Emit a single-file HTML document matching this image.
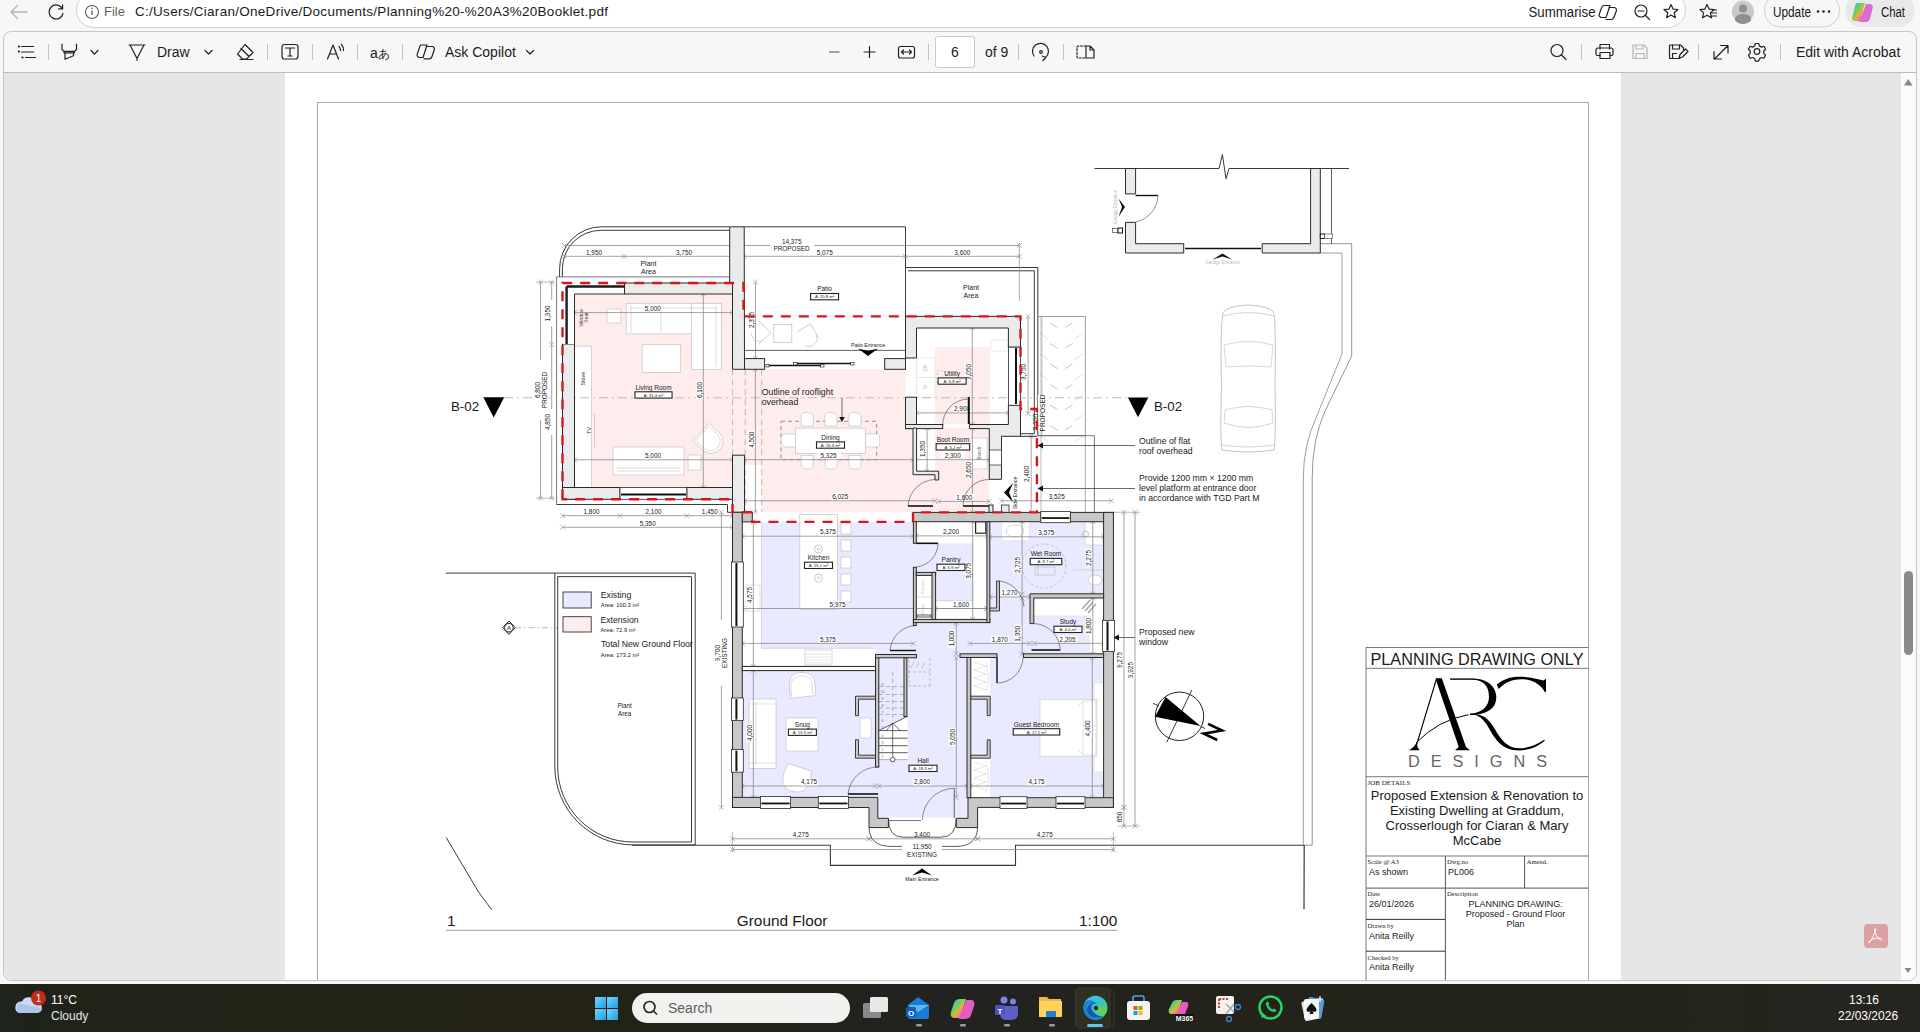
<!DOCTYPE html>
<html><head><meta charset="utf-8"><style>
*{box-sizing:border-box}
html,body{margin:0;padding:0;width:1920px;height:1032px;overflow:hidden;background:#f7f7f7;font-family:"Liberation Sans",sans-serif;color:#1a1a1a}
.a{position:absolute;white-space:nowrap}
#addr{left:76px;top:-8px;width:1610px;height:35.5px;border:1px solid #d2d2d2;border-radius:18px;background:#fff}
#win{left:3px;top:31px;width:1914px;height:950px;border:1px solid #c6c6c6;border-radius:8px;background:#f7f7f7;overflow:hidden}
#content{left:0;top:40px;width:1912px;height:909px;background:#e6e6e6;border-top:1px solid #bcbcbc}
#page{left:281px;top:0;width:1336px;height:909px;background:#fff}
#sb{left:1897px;top:0;width:15px;height:909px;background:#fbfbfb}
#task{left:0;top:984px;width:1920px;height:48px;background:linear-gradient(90deg,#1e231b 0%,#222316 16%,#232214 28%,#222220 50%,#24231a 70%,#21251a 90%,#252420 95%,#25241f 100%)}
.tt{color:#fff;font-size:12px}
.tbt{font-size:14px;color:#1c1c1c}
</style></head><body>

<div id="addr" class="a"></div>
<div id="win" class="a">
  <div id="content" class="a">
    <div id="page" class="a"></div>
    <div id="sb" class="a"></div>
  </div>
</div>
<div class="a" style="left:104px;top:4px;font-size:13px;color:#5f5f5f">File</div>
<div class="a" style="left:135px;top:4px;font-size:13.5px;color:#1a1a1a;letter-spacing:0.28px">C:/Users/Ciaran/OneDrive/Documents/Planning%20-%20A3%20Booklet.pdf</div>
<div class="a tbt" style="left:157px;top:44px">Draw</div>
<div class="a tbt" style="left:445px;top:44px">Ask Copilot</div>
<div class="a" style="left:935px;top:36px;width:40px;height:32px;background:#fff;border:1px solid #c9c9c9;border-radius:3px"></div>
<div class="a tbt" style="left:951px;top:44px">6</div>
<div class="a tbt" style="left:985px;top:44px">of 9</div>
<div class="a tbt" style="left:1796px;top:44px">Edit with Acrobat</div>

<svg class="a" style="left:0;top:0" width="1920" height="1032" viewBox="0 0 1920 1032">
<defs><clipPath id="pg"><rect x="285" y="73" width="1336" height="907"/></clipPath></defs>
<g fill="none" stroke="#b4b4b4" stroke-width="1.3" stroke-linecap="round"><path d="M11 12h16M11 12l6.5-6.5M11 12l6.5 6.5"/></g>
<g fill="none" stroke="#222" stroke-width="1.2" stroke-linecap="round" stroke-linejoin="round"><path d="M62.3 8.6A7 7 0 1 0 63 13.5"/><path d="M62.6 4.8v4h-4"/></g>
<circle cx="92" cy="12" r="6.5" fill="none" stroke="#5a5a5a" stroke-width="1.1"/><path d="M92 10.5v4.5" stroke="#5a5a5a" stroke-width="1.3"/><circle cx="92" cy="8.4" r="0.8" fill="#5a5a5a"/>
<g fill="none" stroke="#222" stroke-width="1.2" stroke-linecap="round" stroke-linejoin="round"><path d="M1604 5.5h6l-4 12h-4.5a2.5 2.5 0 0 1-2.3-3.2l2.5-6.8a3 3 0 0 1 2.3-2z"/><path d="M1609 7.5h5a2.5 2.5 0 0 1 2.4 3.2l-2.5 6.8a3 3 0 0 1-2.3 2h-5.6"/></g>
<g fill="none" stroke="#222" stroke-width="1.2" stroke-linecap="round" stroke-linejoin="round"><circle cx="1641" cy="11" r="6"/><path d="M1645.5 15.5l4 4M1638 11h6"/></g>
<g fill="none" stroke="#222" stroke-width="1.2" stroke-linecap="round" stroke-linejoin="round"><path d="M1671 4.5l2 4.6 5 .4-3.8 3.3 1.2 4.9-4.4-2.7-4.4 2.7 1.2-4.9-3.8-3.3 5-.4z"/></g>
<g fill="none" stroke="#222" stroke-width="1.2" stroke-linecap="round" stroke-linejoin="round"><path d="M1707 4.5l2.1 4.6 5 .5-3.7 3.3 1.1 4.9-4.5-2.6-4.5 2.6 1.1-4.9-3.7-3.3 5-.5z"/><path d="M1712.5 10h4M1711.5 13h5M1711.5 16h5"/></g>
<circle cx="1743" cy="11.5" r="11" fill="#c9c9c9"/><circle cx="1743" cy="8.5" r="4" fill="#8e8e8e"/><path d="M1735 19a8 5 0 0 1 16 0v1.5a11 11 0 0 1-16 0z" fill="#8e8e8e"/>
<rect x="1764.5" y="-6" width="75" height="33" rx="16" fill="#f7f7f7" stroke="#cfcfcf"/>
<circle cx="1818" cy="11.5" r="1.3" fill="#222"/><circle cx="1823.5" cy="11.5" r="1.3" fill="#222"/><circle cx="1829" cy="11.5" r="1.3" fill="#222"/>
<text x="1773" y="16.5" font-size="14" fill="#1a1a1a" font-family="Liberation Sans" textLength="38" lengthAdjust="spacingAndGlyphs">Update</text>
<text x="1528.5" y="16.5" font-size="14" fill="#1a1a1a" font-family="Liberation Sans" textLength="67" lengthAdjust="spacingAndGlyphs">Summarise</text>
<rect x="1845.5" y="-6" width="69" height="33" rx="16" fill="#e9e9e9"/>
<defs><linearGradient id="cg" x1="0" y1="0" x2="1" y2="1"><stop offset="0" stop-color="#2fb6f0"/><stop offset="0.45" stop-color="#7ad34a"/><stop offset="0.55" stop-color="#f4a93b"/><stop offset="1" stop-color="#c94fd8"/></linearGradient></defs>
<path d="M1857 3h8l-5 18h-5a3 3 0 0 1-2.8-3.8l2.8-11a4 4 0 0 1 2-3.2z" fill="url(#cg)"/><path d="M1866 4h4a3 3 0 0 1 2.8 3.8l-2.8 11a4 4 0 0 1-3.8 3.2h-7z" fill="#d85fd0" opacity="0.9"/>
<text x="1881" y="16.5" font-size="14" fill="#1a1a1a" font-family="Liberation Sans" textLength="24" lengthAdjust="spacingAndGlyphs">Chat</text>
<g fill="none" stroke="#222" stroke-width="1.2" stroke-linecap="round" stroke-linejoin="round"><path d="M21.5 46.5h12M21.5 52h12M25.5 57.5h10"/></g><g fill="#222"><circle cx="19" cy="46.5" r="1.1"/><circle cx="19" cy="51.5" r="1.1"/><circle cx="22.5" cy="57.5" r="1.1"/></g>
<path d="M48.5 44v16" stroke="#c4c4c4" stroke-width="1"/>
<path d="M267.5 44v16" stroke="#c4c4c4" stroke-width="1"/>
<path d="M312.5 44v16" stroke="#c4c4c4" stroke-width="1"/>
<path d="M357.5 44v16" stroke="#c4c4c4" stroke-width="1"/>
<path d="M402.5 44v16" stroke="#c4c4c4" stroke-width="1"/>
<path d="M928.5 44v16" stroke="#c4c4c4" stroke-width="1"/>
<path d="M1018.5 44v16" stroke="#c4c4c4" stroke-width="1"/>
<path d="M1063.5 44v16" stroke="#c4c4c4" stroke-width="1"/>
<path d="M1581.5 44v16" stroke="#c4c4c4" stroke-width="1"/>
<path d="M1698.5 44v16" stroke="#c4c4c4" stroke-width="1"/>
<path d="M1780.5 44v16" stroke="#c4c4c4" stroke-width="1"/>
<g fill="none" stroke="#222" stroke-width="1.2" stroke-linecap="round" stroke-linejoin="round"><path d="M62 44v5.5l2 1.8h10.5l2-1.8V44M64 51.3v1.5h10.5v-1.5M65 52.8v6.5l8.5-3.5v-3"/></g>
<g fill="none" stroke="#222" stroke-width="1.2" stroke-linecap="round" stroke-linejoin="round"><path d="M91 50.5l3.5 3.5 3.5-3.5"/></g>
<g fill="none" stroke="#222" stroke-width="1.2" stroke-linecap="round" stroke-linejoin="round"><path d="M129 45h16M130 45l7 13.5 7-13.5M137 58.5v1.8"/></g>
<g fill="none" stroke="#222" stroke-width="1.2" stroke-linecap="round" stroke-linejoin="round"><path d="M205 50.5l3.5 3.5 3.5-3.5"/></g>
<g fill="none" stroke="#222" stroke-width="1.2" stroke-linecap="round" stroke-linejoin="round"><path d="M245 44.5l8 8-6.5 6.5h-4l-5-5zM241 48.5l8 8M240 59.5h13"/></g>
<g fill="none" stroke="#222" stroke-width="1.2" stroke-linecap="round" stroke-linejoin="round"><rect x="282" y="44.5" width="16" height="14.5" rx="2.5"/><path d="M285.5 48h9M290 48v8M288 56h4"/></g>
<g fill="none" stroke="#222" stroke-width="1.2" stroke-linecap="round" stroke-linejoin="round"><path d="M327.5 59l5.5-14 5.5 14M329.5 54h7M339 46.5a5 5 0 0 1 1.5 4M341.5 44.5a8 8 0 0 1 2 6"/></g>
<text x="370" y="57.5" font-size="14" fill="#222" font-family="Liberation Sans">a</text><text x="378" y="57.5" font-size="12" fill="#222" font-family="Liberation Sans">&#x3042;</text>
<g fill="none" stroke="#222" stroke-width="1.2" stroke-linecap="round" stroke-linejoin="round"><path d="M421 45h6l-4 12.5h-3.5a2.5 2.5 0 0 1-2.3-3.3l2.4-7a3 3 0 0 1 1.4-2.2z"/><path d="M427 46.5h5a2.5 2.5 0 0 1 2.3 3.3l-2.4 7a3 3 0 0 1-2.4 2h-5.5"/></g>
<g fill="none" stroke="#222" stroke-width="1.2" stroke-linecap="round" stroke-linejoin="round"><path d="M526.5 50.5l3.5 3.5 3.5-3.5"/></g>
<path d="M829 52h10.5" stroke="#777" stroke-width="1.3"/>
<g fill="none" stroke="#222" stroke-width="1.2" stroke-linecap="round" stroke-linejoin="round"><path d="M864 52h11M869.5 46.5v11"/></g>
<g fill="none" stroke="#222" stroke-width="1.2" stroke-linecap="round" stroke-linejoin="round"><rect x="898.5" y="46.5" width="16" height="11.5" rx="2"/><path d="M901.5 52h10M903.5 50l-2 2 2 2M909.5 50l2 2-2 2"/></g>
<g fill="none" stroke="#222" stroke-width="1.2" stroke-linecap="round" stroke-linejoin="round"><path d="M1034 56a8 8 0 1 1 11.5 1.5"/><path d="M1043 60.5l2.7-3-3.5-1.5"/><circle cx="1041" cy="52" r="1.3"/></g>
<g fill="none" stroke="#222" stroke-width="1.2" stroke-linecap="round" stroke-linejoin="round"><path d="M1086 46h-7.5a1.5 1.5 0 0 0-1.5 1.5v9a1.5 1.5 0 0 0 1.5 1.5h7.5" stroke-dasharray="2 1.6"/><path d="M1086 46h4l4 4v8h-8zM1090 46v4h4"/></g>
<g fill="none" stroke="#222" stroke-width="1.2" stroke-linecap="round" stroke-linejoin="round"><circle cx="1557" cy="50.5" r="6"/><path d="M1561.5 55l4.5 4.5"/></g>
<g fill="none" stroke="#222" stroke-width="1.2" stroke-linecap="round" stroke-linejoin="round"><path d="M1600 49v-4.5h9.5V49M1600 55.5h-2.5a1.5 1.5 0 0 1-1.5-1.5v-4a2 2 0 0 1 2-2h13a2 2 0 0 1 2 2v4a1.5 1.5 0 0 1-1.5 1.5H1610"/><rect x="1600" y="52.5" width="10" height="6"/></g>
<g fill="none" stroke="#b5b5b5" stroke-width="1.2"><path d="M1633 45h11l3 3v10.5h-14z"/><path d="M1636 45v4h7v-4M1636 58.5v-5h8v5"/></g>
<g fill="none" stroke="#222" stroke-width="1.2" stroke-linecap="round" stroke-linejoin="round"><path d="M1680 58.5h-10.5v-13.5h11l3 3v2"/><path d="M1672.5 45v4h7v-4M1672.5 58.5v-5h4"/><path d="M1679 58l1-3.5 5.5-5.5 2.5 2.5-5.5 5.5z"/></g>
<g fill="none" stroke="#222" stroke-width="1.2" stroke-linecap="round" stroke-linejoin="round"><path d="M1714.5 59l13-13M1720.5 45.5h7.5v7.5M1714 51.5V59h7.5"/></g>
<g fill="none" stroke="#222" stroke-width="1.2" stroke-linecap="round" stroke-linejoin="round"><circle cx="1757" cy="51.5" r="2.8"/><path d="M1755.3 43.5h3.4l.6 2.4 2.2 1.2 2.4-.8 1.7 3-1.8 1.7v2.6l1.8 1.7-1.7 3-2.4-.8-2.2 1.2-.6 2.4h-3.4l-.6-2.4-2.2-1.2-2.4.8-1.7-3 1.8-1.7v-2.6l-1.8-1.7 1.7-3 2.4.8 2.2-1.2z"/></g>
<path d="M1904 85.5l4.3-6.5 4.3 6.5z" fill="#888"/>
<path d="M1904.5 968l3.5 5 3.5-5z" fill="#888"/>
<rect x="1904" y="571" width="9" height="84" rx="4.5" fill="#8a8a8a"/>
<rect x="1864" y="924" width="24" height="24" rx="4" fill="#d9a1a1"/>
<path d="M1869 943c3-3 5-8 6.5-13c.5-2 -1-2 -1 0c0 3 2.5 7 5 9.5c2 1 3 0 1-1c-3-1-7-.5-11.5 3c-1 1 -.2 2 .5 1z" fill="none" stroke="#fff" stroke-width="1"/>
<g clip-path="url(#pg)">
<rect x="574.5" y="294" width="158" height="193.5" fill="#ffeded" stroke="none" stroke-width="0" />
<path d="M732.5 369.3 L905.5 369.3 L905.5 428 L989.3 428 L989.3 512.3 L744.5 512.3 L744.5 455 L732.5 455 Z" fill="#ffeded" stroke="none" stroke-width="0" />
<rect x="744.5" y="465" width="17" height="47.3" fill="#fff" stroke="none" stroke-width="0" />
<rect x="935" y="347.2" width="54.8" height="77.3" fill="#ffeded" stroke="none" stroke-width="0" />
<rect x="742.3" y="521.9" width="361.2" height="275.6" fill="#e9e9ff" stroke="none" stroke-width="0" />
<rect x="877.5" y="797" width="90.5" height="20.5" fill="#e9e9ff" stroke="none" stroke-width="0" />
<rect x="574.5" y="346.2" width="16.8" height="141.3" fill="#fff" stroke="#c4c4c4" stroke-width="0.7" />
<text x="585.5" y="378.6" font-size="5.4" text-anchor="middle" fill="#333" font-family="Liberation Sans" transform="rotate(-90 585.5 378.6)" >Stove</text>
<text x="590.5" y="430.5" font-size="6" text-anchor="middle" fill="#333" font-family="Liberation Sans" transform="rotate(-90 590.5 430.5)" >TV</text>
<line x1="594.5" y1="414" x2="594.5" y2="447" stroke="#c4c4c4" stroke-width="0.8" />
<text x="582.5" y="317.5" font-size="5" text-anchor="middle" fill="#444" font-family="Liberation Sans" transform="rotate(-90 582.5 317.5)" >Window</text>
<text x="587.5" y="317.5" font-size="5" text-anchor="middle" fill="#444" font-family="Liberation Sans" transform="rotate(-90 587.5 317.5)" >Seat</text>
<rect x="626.2" y="303.3" width="95.2" height="30.6" fill="#fff" stroke="#c4c4c4" stroke-width="0.7" />
<rect x="691.6" y="303.3" width="29.8" height="66.2" fill="#fff" stroke="#c4c4c4" stroke-width="0.7" />
<line x1="631" y1="305" x2="631" y2="333" stroke="#c4c4c4" stroke-width="0.6" />
<line x1="661" y1="307" x2="661" y2="333" stroke="#c4c4c4" stroke-width="0.6" />
<line x1="631" y1="308" x2="716" y2="308" stroke="#c4c4c4" stroke-width="0.6" />
<line x1="716" y1="305" x2="716" y2="367" stroke="#c4c4c4" stroke-width="0.6" />
<rect x="607" y="309" width="14" height="14" fill="#fff" stroke="#c4c4c4" stroke-width="0.7" />
<rect x="642.2" y="344.5" width="38.5" height="27.9" fill="#fff" stroke="#c4c4c4" stroke-width="0.7" />
<rect x="613" y="447" width="71" height="28" fill="#fff" stroke="#c4c4c4" stroke-width="0.7" />
<line x1="617" y1="468" x2="680" y2="468" stroke="#c4c4c4" stroke-width="0.6" />
<line x1="617" y1="471" x2="680" y2="471" stroke="#c4c4c4" stroke-width="0.6" />
<rect x="688" y="455" width="13" height="15" fill="#fff" stroke="#c4c4c4" stroke-width="0.7" />
<path d="M692.6 440.7 L709.5 423.3 L720 433.5 A12 12 0 0 1 703.5 450.8 Z" fill="#fff" stroke="#c4c4c4" stroke-width="0.8" />
<path d="M695.5 440.5 L709.5 426.5 L717.5 434.5 A9.5 9.5 0 0 1 704 448 Z" fill="none" stroke="#c4c4c4" stroke-width="0.6" />
<rect x="781" y="421.3" width="95.6" height="38.4" fill="none" stroke="#777" stroke-width="0.8" stroke-dasharray="4 3"/>
<path d="M801.2 426 v-10 q0 -3.5 6 -3.5 q6 0 6 3.5 v10 z" fill="#fff" stroke="#c4c4c4" stroke-width="0.7" />
<path d="M801.2 455.5 v10 q0 3.5 6 3.5 q6 0 6 -3.5 v-10 z" fill="#fff" stroke="#c4c4c4" stroke-width="0.7" />
<path d="M825 426 v-10 q0 -3.5 6 -3.5 q6 0 6 3.5 v10 z" fill="#fff" stroke="#c4c4c4" stroke-width="0.7" />
<path d="M825 455.5 v10 q0 3.5 6 3.5 q6 0 6 -3.5 v-10 z" fill="#fff" stroke="#c4c4c4" stroke-width="0.7" />
<path d="M849 426 v-10 q0 -3.5 6 -3.5 q6 0 6 3.5 v10 z" fill="#fff" stroke="#c4c4c4" stroke-width="0.7" />
<path d="M849 455.5 v10 q0 3.5 6 3.5 q6 0 6 -3.5 v-10 z" fill="#fff" stroke="#c4c4c4" stroke-width="0.7" />
<path d="M795.6 434 h-11 q-3.5 0 -3.5 6.5 q0 6.5 3.5 6.5 h11 z" fill="#fff" stroke="#c4c4c4" stroke-width="0.7" />
<path d="M865.3 434 h11 q3.5 0 3.5 6.5 q0 6.5 -3.5 6.5 h-11 z" fill="#fff" stroke="#c4c4c4" stroke-width="0.7" />
<rect x="795.6" y="428.1" width="69.7" height="25.2" fill="#fff" stroke="#c4c4c4" stroke-width="0.7" />
<path d="M759 321 L771 332.5 L758.5 344.5 M751.5 333.5 A8 8 0 0 0 762 341" fill="none" stroke="#c4c4c4" stroke-width="0.8" />
<rect x="773.8" y="324.5" width="18" height="18" fill="none" stroke="#c4c4c4" stroke-width="0.8" />
<path d="M796.3 332.5 L810.6 323.8 L819 338.5 M805 345.5 A8 8 0 0 0 816 335" fill="none" stroke="#c4c4c4" stroke-width="0.8" />
<rect x="916.5" y="358" width="18.5" height="19.5" fill="#fff" stroke="#ddd" stroke-width="0.6" />
<rect x="916.5" y="377.5" width="18.5" height="19.7" fill="#fff" stroke="#ddd" stroke-width="0.6" />
<text x="927" y="368" font-size="4.5" text-anchor="middle" fill="#bbb" font-family="Liberation Sans" transform="rotate(-90 927 368)" >DR</text>
<text x="927" y="387" font-size="4.5" text-anchor="middle" fill="#bbb" font-family="Liberation Sans" transform="rotate(-90 927 387)" >W</text>
<rect x="991" y="340" width="17" height="11" fill="#fff" stroke="#ddd" stroke-width="0.6" />
<path d="M937 371 h9 v13 h-9 z" fill="none" stroke="#aaa" stroke-width="0.6" stroke-dasharray="2 2"/>
<rect x="916.6" y="428" width="18.4" height="43.2" fill="#fff" stroke="none" stroke-width="0" />
<rect x="970" y="438" width="17" height="31" fill="#fff" stroke="#c4c4c4" stroke-width="0.6" />
<text x="981" y="453" font-size="4.5" text-anchor="middle" fill="#666" font-family="Liberation Sans" transform="rotate(-90 981 453)" >Bench</text>
<rect x="1001.5" y="436.3" width="35.4" height="76.1" fill="#fff" stroke="none" stroke-width="0" />
<rect x="742.3" y="521.9" width="19.2" height="145.1" fill="#fff" stroke="none" stroke-width="0" />
<line x1="761.5" y1="521.9" x2="761.5" y2="648.3" stroke="#c4c4c4" stroke-width="0.6" />
<rect x="742.3" y="648.3" width="133.2" height="18.1" fill="#fff" stroke="none" stroke-width="0" />
<line x1="761.5" y1="648.3" x2="875.5" y2="648.3" stroke="#c4c4c4" stroke-width="0.6" />
<rect x="799.8" y="514.5" width="37.8" height="95" fill="#fff" stroke="#c4c4c4" stroke-width="0.7" />
<rect x="841" y="523" width="10" height="11" fill="#fff" stroke="#c4c4c4" stroke-width="0.7" />
<rect x="841" y="540" width="10" height="11" fill="#fff" stroke="#c4c4c4" stroke-width="0.7" />
<rect x="841" y="557" width="10" height="11" fill="#fff" stroke="#c4c4c4" stroke-width="0.7" />
<rect x="841" y="574" width="10" height="11" fill="#fff" stroke="#c4c4c4" stroke-width="0.7" />
<rect x="841" y="591" width="10" height="11" fill="#fff" stroke="#c4c4c4" stroke-width="0.7" />
<circle cx="818.5" cy="549" r="4" fill="none" stroke="#aaa" stroke-width="0.6"/><circle cx="818.5" cy="549" r="1.2" fill="none" stroke="#aaa" stroke-width="0.5"/>
<circle cx="818.5" cy="578" r="4" fill="none" stroke="#aaa" stroke-width="0.6"/><circle cx="818.5" cy="578" r="1.2" fill="none" stroke="#aaa" stroke-width="0.5"/>
<rect x="805" y="650" width="27" height="15" fill="#fff" stroke="#bbb" stroke-width="0.6" />
<line x1="806" y1="654" x2="831" y2="654" stroke="#ccc" stroke-width="0.5" />
<line x1="806" y1="657" x2="831" y2="657" stroke="#ccc" stroke-width="0.5" />
<line x1="806" y1="660" x2="831" y2="660" stroke="#ccc" stroke-width="0.5" />
<line x1="806" y1="663" x2="831" y2="663" stroke="#ccc" stroke-width="0.5" />
<rect x="746" y="585" width="14" height="26" fill="#fff" stroke="#ccc" stroke-width="0.6" />
<rect x="749" y="699" width="27" height="69.5" fill="#fff" stroke="#c4c4c4" stroke-width="0.7" />
<line x1="756" y1="702" x2="756" y2="765" stroke="#c4c4c4" stroke-width="0.6" />
<line x1="749" y1="704" x2="776" y2="704" stroke="#c4c4c4" stroke-width="0.5" />
<line x1="749" y1="763" x2="776" y2="763" stroke="#c4c4c4" stroke-width="0.5" />
<rect x="786" y="718" width="32" height="33" fill="#fff" stroke="#c4c4c4" stroke-width="0.6" />
<path d="M790.5 698.5 Q788 684 791 677 Q795 672 803 672.4 Q812 673 814.5 680 Q816 690 815 695.5 Z" fill="#fff" stroke="#c4c4c4" stroke-width="0.8" />
<path d="M791.5 696 Q790 684 793 679 Q797 675.5 803 675.8 Q810 676 812 682 Q813 690 812 694" fill="none" stroke="#c4c4c4" stroke-width="0.6" />
<path d="M788 763.5 L811.5 771 Q811 786 803 791 Q795 794 787 789 Q781 784 783.5 774 Z" fill="#fff" stroke="#c4c4c4" stroke-width="0.8" />
<rect x="860" y="718" width="11" height="20" fill="#fff" stroke="#c4c4c4" stroke-width="0.6" />
<path d="M878.8 730.6 L907.5 716.3 V759.6 H878.8 Z" fill="#fff" stroke="none" stroke-width="0" />
<line x1="878.8" y1="686.6" x2="904" y2="686.6" stroke="#999" stroke-width="0.7" stroke-dasharray="4 3"/>
<line x1="878.8" y1="694.5" x2="904" y2="694.5" stroke="#999" stroke-width="0.7" stroke-dasharray="4 3"/>
<line x1="878.8" y1="701.5" x2="904" y2="701.5" stroke="#999" stroke-width="0.7" stroke-dasharray="4 3"/>
<line x1="878.8" y1="708" x2="904" y2="708" stroke="#999" stroke-width="0.7" stroke-dasharray="4 3"/>
<line x1="878.8" y1="714.5" x2="904" y2="714.5" stroke="#999" stroke-width="0.7" stroke-dasharray="4 3"/>
<line x1="892.7" y1="672" x2="892.7" y2="718" stroke="#999" stroke-width="0.7" stroke-dasharray="4 3"/>
<line x1="878.8" y1="730.6" x2="907.5" y2="730.6" stroke="#333" stroke-width="0.8" />
<line x1="878.8" y1="738.2" x2="907.5" y2="738.2" stroke="#333" stroke-width="0.8" />
<line x1="878.8" y1="745.7" x2="907.5" y2="745.7" stroke="#333" stroke-width="0.8" />
<line x1="878.8" y1="752.7" x2="907.5" y2="752.7" stroke="#333" stroke-width="0.8" />
<line x1="878.8" y1="759.6" x2="907.5" y2="759.6" stroke="#999" stroke-width="0.7" />
<line x1="878.8" y1="730.6" x2="907.5" y2="716.3" stroke="#333" stroke-width="0.8" />
<path d="M886 731 L892.7 723 L900.5 731 M892.7 723 V757" fill="none" stroke="#333" stroke-width="0.7" />
<circle cx="892.7" cy="759.6" r="2.3" fill="#fff" stroke="#333" stroke-width="0.8"/>
<text x="882.5" y="758" font-size="3.6" text-anchor="middle" fill="#777" font-family="Liberation Sans" >1</text>
<text x="882.5" y="751" font-size="3.6" text-anchor="middle" fill="#777" font-family="Liberation Sans" >2</text>
<text x="882.5" y="744" font-size="3.6" text-anchor="middle" fill="#777" font-family="Liberation Sans" >3</text>
<text x="882.5" y="736.5" font-size="3.6" text-anchor="middle" fill="#777" font-family="Liberation Sans" >4</text>
<text x="882.5" y="729" font-size="3.6" text-anchor="middle" fill="#777" font-family="Liberation Sans" >5</text>
<text x="882.5" y="722" font-size="3.6" text-anchor="middle" fill="#777" font-family="Liberation Sans" >6</text>
<text x="882.5" y="713.5" font-size="3.6" text-anchor="middle" fill="#777" font-family="Liberation Sans" >7</text>
<text x="882.5" y="707" font-size="3.6" text-anchor="middle" fill="#777" font-family="Liberation Sans" >8</text>
<text x="882.5" y="700" font-size="3.6" text-anchor="middle" fill="#777" font-family="Liberation Sans" >9</text>
<text x="882.5" y="692.5" font-size="3.6" text-anchor="middle" fill="#777" font-family="Liberation Sans" >10</text>
<text x="882.5" y="685.5" font-size="3.6" text-anchor="middle" fill="#777" font-family="Liberation Sans" >11</text>
<path d="M909 660 v26 h21 M908 672 h22 M930 658 v28" fill="none" stroke="#aaa" stroke-width="0.7" stroke-dasharray="3 2"/>
<path d="M911 668 l3 -6 M916 668 l3 -6 M922 668 l3 -6" fill="none" stroke="#aaa" stroke-width="0.6" />
<rect x="916.3" y="521.7" width="70.9" height="21.6" fill="#fff" stroke="none" stroke-width="0" />
<rect x="972.7" y="521.7" width="14.5" height="97.8" fill="#fff" stroke="none" stroke-width="0" />
<rect x="935.5" y="600.8" width="51.7" height="18.7" fill="#fff" stroke="none" stroke-width="0" />
<path d="M935.5 600.8 H972.7 V543.3" fill="none" stroke="#bbb" stroke-width="0.6" />
<rect x="975.6" y="521.7" width="10.2" height="11.5" fill="#fff" stroke="#222" stroke-width="1.2" />
<rect x="916.3" y="575" width="15.7" height="44.6" fill="#fff" stroke="#ccc" stroke-width="0.6" />
<line x1="916.3" y1="597" x2="932" y2="597" stroke="#ccc" stroke-width="0.6" />
<text x="924" y="587" font-size="3.8" text-anchor="middle" fill="#bbb" font-family="Liberation Sans" transform="rotate(-90 924 587)" >Freezer</text>
<text x="924" y="609" font-size="3.8" text-anchor="middle" fill="#bbb" font-family="Liberation Sans" transform="rotate(-90 924 609)" >Fridge</text>
<rect x="917" y="615" width="14" height="2" fill="#fff" stroke="#333" stroke-width="0.8" />
<rect x="1001.3" y="521.3" width="27.9" height="19.4" fill="#fff" stroke="#ddd" stroke-width="0.6" />
<ellipse cx="1015" cy="531" rx="9" ry="6" fill="none" stroke="#bbb" stroke-width="0.6"/>
<circle cx="1044" cy="566" r="22" fill="none" stroke="#aaa" stroke-width="0.6" stroke-dasharray="3 2"/>
<rect x="1085" y="522" width="18" height="23" fill="#fff" stroke="#ccc" stroke-width="0.6" />
<circle cx="1085.5" cy="534" r="3" fill="none" stroke="#999" stroke-width="0.6"/>
<ellipse cx="1095" cy="580" rx="7" ry="5" fill="#fff" stroke="#bbb" stroke-width="0.6"/>
<line x1="1073" y1="570" x2="1103" y2="570" stroke="#ccc" stroke-width="0.8" />
<path d="M1035 567 h20 v8 h-20 z M1038 562 v14" fill="none" stroke="#bbb" stroke-width="0.6" />
<rect x="1034" y="598" width="69.6" height="18" fill="#fff" stroke="none" stroke-width="0" />
<rect x="1090" y="598" width="13.6" height="55.8" fill="#fff" stroke="none" stroke-width="0" />
<line x1="1034" y1="616" x2="1090" y2="616" stroke="#ddd" stroke-width="0.6" />
<path d="M1082 609 l8 -9 M1085 611 l8 -9 M1088 613 l8 -9" fill="none" stroke="#aaa" stroke-width="1.6" />
<rect x="1094" y="683" width="9.5" height="89" fill="#fff" stroke="#ddd" stroke-width="0.6" />
<rect x="1040" y="699.3" width="57" height="57" fill="#fff" stroke="#ccc" stroke-width="0.7" />
<rect x="1083" y="701" width="13" height="25" fill="#fff" stroke="#ccc" stroke-width="0.6" />
<rect x="1083" y="730" width="13" height="25" fill="#fff" stroke="#ccc" stroke-width="0.6" />
<path d="M1083 701 l-5 5 M1083 755 l-5 -5" fill="none" stroke="#ccc" stroke-width="0.6" />
<rect x="971" y="657.8" width="19" height="38.2" fill="#fff" stroke="none" stroke-width="0" />
<rect x="971" y="758" width="19" height="39" fill="#fff" stroke="none" stroke-width="0" />
<path d="M974 662 l12 4 l-12 4 l12 4 l-12 4 l12 4 l-12 4 l12 4 M986 662 l3 15 l-3 15" fill="none" stroke="#ccc" stroke-width="0.5" />
<path d="M974 762 l12 4 l-12 4 l12 4 l-12 4 l12 4 l-12 4 l12 4 M986 762 l3 15 l-3 15" fill="none" stroke="#ccc" stroke-width="0.5" />
<rect x="317.5" y="102.5" width="1271" height="900" fill="none" stroke="#a8a8a8" stroke-width="1" />
<path d="M559.6 277 V268.8 A42 42 0 0 1 601.5 226.8 H729.7" fill="none" stroke="#3a3a3a" stroke-width="1" />
<path d="M562.4 277 V268.8 A38.5 38.5 0 0 1 600.9 230.3 H729.7" fill="none" stroke="#3a3a3a" stroke-width="1" />
<path d="M556.6 504.5 V276.9 H729.7" fill="none" stroke="#777" stroke-width="1" />
<path d="M556.6 504.5 H727.5 V512.3 H732.5" fill="none" stroke="#3a3a3a" stroke-width="1" />
<path d="M744.2 226.8 H905.5 V358.6" fill="none" stroke="#3a3a3a" stroke-width="1" />
<line x1="744.5" y1="350.4" x2="905.5" y2="350.4" stroke="#3a3a3a" stroke-width="0.8" />
<line x1="732.6" y1="369.3" x2="732.6" y2="512" stroke="#aaa" stroke-width="0.8" stroke-dasharray="6 4"/>
<line x1="745.2" y1="369.3" x2="745.2" y2="512" stroke="#aaa" stroke-width="0.8" stroke-dasharray="6 4"/>
<line x1="761.7" y1="369.3" x2="761.7" y2="512" stroke="#aaa" stroke-width="0.8" stroke-dasharray="6 4"/>
<path d="M905.5 267.5 H1037.8 V435.7" fill="none" stroke="#3a3a3a" stroke-width="1" />
<path d="M908 270.8 H1034.3 V433.7 H1020.5" fill="none" stroke="#3a3a3a" stroke-width="1" />
<rect x="1037.8" y="316.5" width="47.5" height="119.2" fill="none" stroke="#888" stroke-width="0.8" />
<line x1="1042" y1="316.5" x2="1042" y2="435.7" stroke="#aaa" stroke-width="0.6" />
<path d="M1050 323.0 l7.5 4.5 M1065 327.5 l7.5 -4.5" fill="none" stroke="#999" stroke-width="0.6" />
<path d="M1040 333.0 l8 6 M1083 333.0 l-8 6" fill="none" stroke="#bbb" stroke-width="0.5" />
<path d="M1050 343.5 l7.5 4.5 M1065 348.0 l7.5 -4.5" fill="none" stroke="#999" stroke-width="0.6" />
<path d="M1040 353.5 l8 6 M1083 353.5 l-8 6" fill="none" stroke="#bbb" stroke-width="0.5" />
<path d="M1050 364.0 l7.5 4.5 M1065 368.5 l7.5 -4.5" fill="none" stroke="#999" stroke-width="0.6" />
<path d="M1040 374.0 l8 6 M1083 374.0 l-8 6" fill="none" stroke="#bbb" stroke-width="0.5" />
<path d="M1050 384.5 l7.5 4.5 M1065 389.0 l7.5 -4.5" fill="none" stroke="#999" stroke-width="0.6" />
<path d="M1040 394.5 l8 6 M1083 394.5 l-8 6" fill="none" stroke="#bbb" stroke-width="0.5" />
<path d="M1050 405.0 l7.5 4.5 M1065 409.5 l7.5 -4.5" fill="none" stroke="#999" stroke-width="0.6" />
<path d="M1040 415.0 l8 6 M1083 415.0 l-8 6" fill="none" stroke="#bbb" stroke-width="0.5" />
<path d="M1050 425.5 l7.5 4.5 M1065 430.0 l7.5 -4.5" fill="none" stroke="#999" stroke-width="0.6" />
<path d="M1040 435.5 l8 6 M1083 435.5 l-8 6" fill="none" stroke="#bbb" stroke-width="0.5" />
<path d="M1037.8 435.7 H1094.4 V512.4" fill="none" stroke="#555" stroke-width="0.8" />
<line x1="1085.3" y1="435.7" x2="1085.3" y2="512.4" stroke="#999" stroke-width="0.8" />
<path d="M1320.3 253 H1342 V354 L1316.8 416 Q1303.3 445 1303.3 478 V845.2" fill="none" stroke="#888" stroke-width="0.8" />
<path d="M1320.3 243.7 H1351.7 V356 L1324.6 412 Q1312.2 440 1312.2 478 V845.2 H1304" fill="none" stroke="#777" stroke-width="0.8" />
<line x1="1304.2" y1="845.2" x2="1304" y2="909.2" stroke="#3a3a3a" stroke-width="1.2" />
<path d="M632 845.3 H830.4 V865.4 H1015.5 V845.3 H1304.2" fill="none" stroke="#3a3a3a" stroke-width="1.1" />
<path d="M446.2 837.5 L478.5 892 L491.7 909.7" fill="none" stroke="#3a3a3a" stroke-width="1" />
<path d="M869 827.6 Q869.5 846.4 891 846.4 H956 Q977 846.4 977.6 827.6" fill="none" stroke="#333" stroke-width="0.8" />
<line x1="445.8" y1="573.1" x2="554.8" y2="573.1" stroke="#3a3a3a" stroke-width="1" />
<path d="M554.8 573.1 V766.4 A78.5 78.5 0 0 0 633 844.9 H695.2 V573.1 Z" fill="none" stroke="#3a3a3a" stroke-width="1" />
<path d="M557.7 576.6 V766 A75 75 0 0 0 633 842 H691.5 V576.6 Z" fill="none" stroke="#3a3a3a" stroke-width="1" />
<rect x="563" y="592" width="28.2" height="16" fill="#e9e9ff" stroke="#333" stroke-width="0.9" />
<rect x="563" y="616.7" width="28.2" height="15.3" fill="#ffeded" stroke="#333" stroke-width="0.9" />
<text x="600.8" y="597.8" font-size="8.7" text-anchor="start" fill="#1a1a1a" font-family="Liberation Sans" >Existing</text>
<text x="600.8" y="607.4" font-size="5.8" text-anchor="start" fill="#1a1a1a" font-family="Liberation Sans" >Area: 100.3 m&#178;</text>
<text x="600.4" y="622.5" font-size="8.7" text-anchor="start" fill="#1a1a1a" font-family="Liberation Sans" >Extension</text>
<text x="600.4" y="632" font-size="5.8" text-anchor="start" fill="#1a1a1a" font-family="Liberation Sans" >Area: 72.9 m&#178;</text>
<text x="601" y="646.6" font-size="8.7" text-anchor="start" fill="#1a1a1a" font-family="Liberation Sans" >Total New Ground Floor</text>
<text x="600.8" y="656.5" font-size="5.8" text-anchor="start" fill="#1a1a1a" font-family="Liberation Sans" >Area: 173.2 m&#178;</text>
<text x="624.6" y="708" font-size="6.3" text-anchor="middle" fill="#1a1a1a" font-family="Liberation Sans" >Plant</text>
<text x="624.6" y="715.5" font-size="6.3" text-anchor="middle" fill="#1a1a1a" font-family="Liberation Sans" >Area</text>
<line x1="515" y1="627.7" x2="557" y2="627.7" stroke="#999" stroke-width="0.7" stroke-dasharray="6 3 1.5 3"/>
<path d="M502.5 627.7 L508.9 621 L515.3 627.7 L508.9 634.4 Z" fill="#fff" stroke="#222" stroke-width="1" />
<circle cx="508.9" cy="627.7" r="4.3" fill="#fff" stroke="#222" stroke-width="1"/>
<text x="508.9" y="630.2" font-size="6" text-anchor="middle" fill="#1a1a1a" font-family="Liberation Sans" >A</text>
<line x1="504" y1="397.8" x2="1128" y2="397.8" stroke="#bbb" stroke-width="1" stroke-dasharray="9 4 2 4"/>
<path d="M483.3 397.2 H504.2 L493.7 417.6 Z" fill="#000"/>
<path d="M1127.9 397.5 H1148.3 L1138 417.2 Z" fill="#000"/>
<text x="451" y="411" font-size="13.3" text-anchor="start" fill="#1a1a1a" font-family="Liberation Sans" >B-02</text>
<text x="1154" y="411" font-size="13.3" text-anchor="start" fill="#1a1a1a" font-family="Liberation Sans" >B-02</text>
<path d="M1094.5 168.5 H1219 L1222.4 154.5 L1226 178.8 L1229 168.5 H1349" fill="none" stroke="#3a3a3a" stroke-width="1" />
<path d="M1125.5 168.5 L1135.6 168.5 L1135.6 193.9 L1125.5 193.9 Z" fill="#ebebeb" stroke="#2a2a2a" stroke-width="1" />
<path d="M1125.5 222.4 L1135.6 222.4 L1135.6 243.7 L1183.7 243.7 L1183.7 253 L1125.5 253 Z" fill="#ebebeb" stroke="#2a2a2a" stroke-width="1" />
<path d="M1262.2 243.7 L1310.6 243.7 L1310.6 168.5 L1320.3 168.5 L1320.3 253 L1262.2 253 Z" fill="#ebebeb" stroke="#2a2a2a" stroke-width="1" />
<line x1="1331.5" y1="168.5" x2="1331.5" y2="243.7" stroke="#3a3a3a" stroke-width="0.8" />
<line x1="1185" y1="248.5" x2="1261" y2="248.5" stroke="#111" stroke-width="1.5" />
<line x1="1135.6" y1="195.5" x2="1158" y2="195.5" stroke="#111" stroke-width="1.4" />
<path d="M1158 195.5 A28 28 0 0 1 1135.6 222" fill="none" stroke="#444" stroke-width="0.6" />
<path d="M1118.5 198.5 L1125 207 L1118.5 217 L1122 207 Z" fill="#111"/>
<text x="1116.5" y="207" font-size="4.5" text-anchor="middle" fill="#bbb" font-family="Liberation Sans" transform="rotate(-90 1116.5 207)" >Garage Entrance</text>
<path d="M1212.5 259.5 L1222.5 253.5 L1232 259.5 L1222.5 256.5 Z" fill="#111"/>
<text x="1222.5" y="263.5" font-size="4.5" text-anchor="middle" fill="#bbb" font-family="Liberation Sans" >Garage Entrance</text>
<rect x="1112.5" y="228.5" width="5.5" height="4" fill="#fff" stroke="#444" stroke-width="0.7" />
<rect x="1118" y="228" width="4.5" height="5" fill="#fff" stroke="#111" stroke-width="1" />
<rect x="1320.3" y="234" width="4.2" height="4.5" fill="#fff" stroke="#111" stroke-width="1" />
<rect x="1324.5" y="234" width="8" height="4.5" fill="#fff" stroke="#555" stroke-width="0.7" />
<path d="M1223 313 Q1226 306 1248 305 Q1271 306 1274 313 Q1276 330 1275 385 Q1276 440 1274 450 Q1248 454 1222 450 Q1220 440 1221.5 385 Q1220 330 1223 313 Z" fill="none" stroke="#aaa" stroke-width="0.7" />
<path d="M1224 345 Q1248 338 1273 345 L1271 367 Q1248 365 1226 367 Z" fill="none" stroke="#bbb" stroke-width="0.6" />
<path d="M1225 410 Q1248 403 1272 410 L1273 423 Q1248 432 1224 423 Z" fill="none" stroke="#bbb" stroke-width="0.6" />
<path d="M1223 316 Q1248 309 1274 316" fill="none" stroke="#bbb" stroke-width="0.6" />
<path d="M1222 445 Q1248 449 1274 445" fill="none" stroke="#bbb" stroke-width="0.6" />
<circle cx="1179.5" cy="716.3" r="24.2" fill="none" stroke="#222" stroke-width="1"/>
<line x1="1166.7" y1="742.3" x2="1191.9" y2="690" stroke="#222" stroke-width="0.9" />
<line x1="1153.1" y1="703.4" x2="1158.6" y2="705.8" stroke="#222" stroke-width="0.9" />
<path d="M1165.6 697 L1155 716.7 L1200.5 726 Z" fill="#000"/>
<path d="M1208.1 723.8 L1222 730.5 L1203.7 733.6 L1217.3 740" fill="none" stroke="#000" stroke-width="2.6"/>
<line x1="1200.5" y1="726.3" x2="1205" y2="728.5" stroke="#222" stroke-width="0.9" />
<line x1="564.4" y1="245.5" x2="1019.4" y2="245.5" stroke="#8a8a8a" stroke-width="0.8" />
<path d="M564.4 245.5 l-2.5 2.5 M564.4 245.5 l2.5 2.5 M564.4 245.5 l-2.5 -2.5 M564.4 245.5 l2.5 -2.5" stroke="#8a8a8a" stroke-width="0.6"/>
<path d="M1019.4 245.5 l-2.5 2.5 M1019.4 245.5 l2.5 2.5 M1019.4 245.5 l-2.5 -2.5 M1019.4 245.5 l2.5 -2.5" stroke="#8a8a8a" stroke-width="0.6"/>
<rect x="770" y="237" width="44" height="16" fill="#fff" stroke="none" stroke-width="0" />
<text x="791.7" y="243.6" font-size="6.4" text-anchor="middle" fill="#1a1a1a" font-family="Liberation Sans" >14,375</text>
<text x="791.5" y="250.8" font-size="6.4" text-anchor="middle" fill="#1a1a1a" font-family="Liberation Sans" >PROPOSED</text>
<line x1="564.4" y1="256.3" x2="1019.4" y2="256.3" stroke="#8a8a8a" stroke-width="0.8" />
<path d="M564.4 256.3 l-2.5 2.5 M564.4 256.3 l2.5 2.5 M564.4 256.3 l-2.5 -2.5 M564.4 256.3 l2.5 -2.5" stroke="#8a8a8a" stroke-width="0.6"/>
<path d="M624 256.3 l-2.5 2.5 M624 256.3 l2.5 2.5 M624 256.3 l-2.5 -2.5 M624 256.3 l2.5 -2.5" stroke="#8a8a8a" stroke-width="0.6"/>
<path d="M744 256.3 l-2.5 2.5 M744 256.3 l2.5 2.5 M744 256.3 l-2.5 -2.5 M744 256.3 l2.5 -2.5" stroke="#8a8a8a" stroke-width="0.6"/>
<path d="M905.3 256.3 l-2.5 2.5 M905.3 256.3 l2.5 2.5 M905.3 256.3 l-2.5 -2.5 M905.3 256.3 l2.5 -2.5" stroke="#8a8a8a" stroke-width="0.6"/>
<path d="M1019.4 256.3 l-2.5 2.5 M1019.4 256.3 l2.5 2.5 M1019.4 256.3 l-2.5 -2.5 M1019.4 256.3 l2.5 -2.5" stroke="#8a8a8a" stroke-width="0.6"/>
<rect x="582" y="248" width="24" height="7.2" fill="#fff" stroke="none" stroke-width="0" />
<text x="594" y="254.8" font-size="6.4" text-anchor="middle" fill="#1a1a1a" font-family="Liberation Sans" >1,950</text>
<rect x="672" y="248" width="24" height="7.2" fill="#fff" stroke="none" stroke-width="0" />
<text x="684" y="254.8" font-size="6.4" text-anchor="middle" fill="#1a1a1a" font-family="Liberation Sans" >3,750</text>
<rect x="812.7" y="248" width="24" height="7.2" fill="#fff" stroke="none" stroke-width="0" />
<text x="824.7" y="254.8" font-size="6.4" text-anchor="middle" fill="#1a1a1a" font-family="Liberation Sans" >5,075</text>
<rect x="950.3" y="248" width="24" height="7.2" fill="#fff" stroke="none" stroke-width="0" />
<text x="962.3" y="254.8" font-size="6.4" text-anchor="middle" fill="#1a1a1a" font-family="Liberation Sans" >3,600</text>
<line x1="1019.4" y1="243" x2="1019.4" y2="301" stroke="#8c8c8c" stroke-width="0.7" />
<line x1="540.5" y1="282.1" x2="540.5" y2="498.2" stroke="#8a8a8a" stroke-width="0.8" />
<path d="M540.5 282.1 l-2.5 2.5 M540.5 282.1 l2.5 2.5 M540.5 282.1 l-2.5 -2.5 M540.5 282.1 l2.5 -2.5" stroke="#8a8a8a" stroke-width="0.6"/>
<path d="M540.5 498.2 l-2.5 2.5 M540.5 498.2 l2.5 2.5 M540.5 498.2 l-2.5 -2.5 M540.5 498.2 l2.5 -2.5" stroke="#8a8a8a" stroke-width="0.6"/>
<line x1="536" y1="282.1" x2="555" y2="282.1" stroke="#8c8c8c" stroke-width="0.6" />
<line x1="536" y1="498.2" x2="555" y2="498.2" stroke="#8c8c8c" stroke-width="0.6" />
<rect x="533" y="360" width="16" height="60" fill="#fff" stroke="none" stroke-width="0" />
<text x="539.5" y="390" font-size="6.4" text-anchor="middle" fill="#1a1a1a" font-family="Liberation Sans" transform="rotate(-90 539.5 390)" >6,800</text>
<text x="546.5" y="390" font-size="6.4" text-anchor="middle" fill="#1a1a1a" font-family="Liberation Sans" transform="rotate(-90 546.5 390)" >PROPOSED</text>
<line x1="551.7" y1="282.1" x2="551.7" y2="498.2" stroke="#8a8a8a" stroke-width="0.8" />
<path d="M551.7 282.1 l-2.5 2.5 M551.7 282.1 l2.5 2.5 M551.7 282.1 l-2.5 -2.5 M551.7 282.1 l2.5 -2.5" stroke="#8a8a8a" stroke-width="0.6"/>
<path d="M551.7 344.5 l-2.5 2.5 M551.7 344.5 l2.5 2.5 M551.7 344.5 l-2.5 -2.5 M551.7 344.5 l2.5 -2.5" stroke="#8a8a8a" stroke-width="0.6"/>
<path d="M551.7 498.2 l-2.5 2.5 M551.7 498.2 l2.5 2.5 M551.7 498.2 l-2.5 -2.5 M551.7 498.2 l2.5 -2.5" stroke="#8a8a8a" stroke-width="0.6"/>
<rect x="545" y="300" width="8" height="26" fill="#fff" stroke="none" stroke-width="0" />
<text x="550.2" y="313.4" font-size="6.4" text-anchor="middle" fill="#1a1a1a" font-family="Liberation Sans" transform="rotate(-90 550.2 313.4)" >1,950</text>
<rect x="545" y="409" width="8" height="26" fill="#fff" stroke="none" stroke-width="0" />
<text x="550.2" y="422" font-size="6.4" text-anchor="middle" fill="#1a1a1a" font-family="Liberation Sans" transform="rotate(-90 550.2 422)" >4,850</text>
<line x1="562.7" y1="515.7" x2="732.7" y2="515.7" stroke="#8a8a8a" stroke-width="0.8" />
<path d="M562.7 515.7 l-2.5 2.5 M562.7 515.7 l2.5 2.5 M562.7 515.7 l-2.5 -2.5 M562.7 515.7 l2.5 -2.5" stroke="#8a8a8a" stroke-width="0.6"/>
<path d="M620 515.7 l-2.5 2.5 M620 515.7 l2.5 2.5 M620 515.7 l-2.5 -2.5 M620 515.7 l2.5 -2.5" stroke="#8a8a8a" stroke-width="0.6"/>
<path d="M686.8 515.7 l-2.5 2.5 M686.8 515.7 l2.5 2.5 M686.8 515.7 l-2.5 -2.5 M686.8 515.7 l2.5 -2.5" stroke="#8a8a8a" stroke-width="0.6"/>
<path d="M732.7 515.7 l-2.5 2.5 M732.7 515.7 l2.5 2.5 M732.7 515.7 l-2.5 -2.5 M732.7 515.7 l2.5 -2.5" stroke="#8a8a8a" stroke-width="0.6"/>
<rect x="580.5" y="507.5" width="22" height="7.2" fill="#fff" stroke="none" stroke-width="0" />
<text x="591.5" y="514" font-size="6.4" text-anchor="middle" fill="#1a1a1a" font-family="Liberation Sans" >1,800</text>
<rect x="642.5" y="507.5" width="22" height="7.2" fill="#fff" stroke="none" stroke-width="0" />
<text x="653.5" y="514" font-size="6.4" text-anchor="middle" fill="#1a1a1a" font-family="Liberation Sans" >2,100</text>
<rect x="698.7" y="507.5" width="22" height="7.2" fill="#fff" stroke="none" stroke-width="0" />
<text x="709.7" y="514" font-size="6.4" text-anchor="middle" fill="#1a1a1a" font-family="Liberation Sans" >1,450</text>
<line x1="562.7" y1="527.3" x2="732.7" y2="527.3" stroke="#8a8a8a" stroke-width="0.8" />
<path d="M562.7 527.3 l-2.5 2.5 M562.7 527.3 l2.5 2.5 M562.7 527.3 l-2.5 -2.5 M562.7 527.3 l2.5 -2.5" stroke="#8a8a8a" stroke-width="0.6"/>
<path d="M732.7 527.3 l-2.5 2.5 M732.7 527.3 l2.5 2.5 M732.7 527.3 l-2.5 -2.5 M732.7 527.3 l2.5 -2.5" stroke="#8a8a8a" stroke-width="0.6"/>
<rect x="638.69" y="519.7" width="18.01" height="6.9" fill="#fff" stroke="none" stroke-width="0" class="lb"/>
<text x="647.7" y="525.5" font-size="6.4" text-anchor="middle" fill="#1a1a1a" font-family="Liberation Sans" >5,350</text>
<line x1="574.4" y1="312.6" x2="732.4" y2="312.6" stroke="#8a8a8a" stroke-width="0.8" />
<path d="M574.4 312.6 l-2.5 2.5 M574.4 312.6 l2.5 2.5 M574.4 312.6 l-2.5 -2.5 M574.4 312.6 l2.5 -2.5" stroke="#8a8a8a" stroke-width="0.6"/>
<path d="M732.4 312.6 l-2.5 2.5 M732.4 312.6 l2.5 2.5 M732.4 312.6 l-2.5 -2.5 M732.4 312.6 l2.5 -2.5" stroke="#8a8a8a" stroke-width="0.6"/>
<rect x="643.79" y="305" width="18.01" height="6.9" fill="#fff" stroke="none" stroke-width="0" class="lb"/>
<text x="652.8" y="310.8" font-size="6.4" text-anchor="middle" fill="#1a1a1a" font-family="Liberation Sans" >5,000</text>
<line x1="574.5" y1="459.8" x2="732.7" y2="459.8" stroke="#8a8a8a" stroke-width="0.8" />
<path d="M574.5 459.8 l-2.5 2.5 M574.5 459.8 l2.5 2.5 M574.5 459.8 l-2.5 -2.5 M574.5 459.8 l2.5 -2.5" stroke="#8a8a8a" stroke-width="0.6"/>
<path d="M732.7 459.8 l-2.5 2.5 M732.7 459.8 l2.5 2.5 M732.7 459.8 l-2.5 -2.5 M732.7 459.8 l2.5 -2.5" stroke="#8a8a8a" stroke-width="0.6"/>
<rect x="643.99" y="452.2" width="18.01" height="6.9" fill="#fff" stroke="none" stroke-width="0" class="lb"/>
<text x="653" y="458" font-size="6.4" text-anchor="middle" fill="#1a1a1a" font-family="Liberation Sans" >5,000</text>
<line x1="703.3" y1="294" x2="703.3" y2="487.5" stroke="#8a8a8a" stroke-width="0.8" />
<path d="M703.3 294 l-2.5 2.5 M703.3 294 l2.5 2.5 M703.3 294 l-2.5 -2.5 M703.3 294 l2.5 -2.5" stroke="#8a8a8a" stroke-width="0.6"/>
<path d="M703.3 487.5 l-2.5 2.5 M703.3 487.5 l2.5 2.5 M703.3 487.5 l-2.5 -2.5 M703.3 487.5 l2.5 -2.5" stroke="#8a8a8a" stroke-width="0.6"/>
<rect x="695.7" y="380.99" width="6.9" height="18.01" fill="#fff" stroke="none" stroke-width="0" />
<text x="701.5" y="390" font-size="6.4" text-anchor="middle" fill="#1a1a1a" font-family="Liberation Sans" transform="rotate(-90 701.5 390)" >6,100</text>
<line x1="755.5" y1="282" x2="755.5" y2="358.6" stroke="#8a8a8a" stroke-width="0.8" />
<path d="M755.5 282 l-2.5 2.5 M755.5 282 l2.5 2.5 M755.5 282 l-2.5 -2.5 M755.5 282 l2.5 -2.5" stroke="#8a8a8a" stroke-width="0.6"/>
<path d="M755.5 358.6 l-2.5 2.5 M755.5 358.6 l2.5 2.5 M755.5 358.6 l-2.5 -2.5 M755.5 358.6 l2.5 -2.5" stroke="#8a8a8a" stroke-width="0.6"/>
<rect x="747.9" y="310.99" width="6.9" height="18.01" fill="#fff" stroke="none" stroke-width="0" />
<text x="753.7" y="320" font-size="6.4" text-anchor="middle" fill="#1a1a1a" font-family="Liberation Sans" transform="rotate(-90 753.7 320)" >2,375</text>
<line x1="755.4" y1="369.3" x2="755.4" y2="512" stroke="#8a8a8a" stroke-width="0.8" />
<path d="M755.4 369.3 l-2.5 2.5 M755.4 369.3 l2.5 2.5 M755.4 369.3 l-2.5 -2.5 M755.4 369.3 l2.5 -2.5" stroke="#8a8a8a" stroke-width="0.6"/>
<path d="M755.4 512 l-2.5 2.5 M755.4 512 l2.5 2.5 M755.4 512 l-2.5 -2.5 M755.4 512 l2.5 -2.5" stroke="#8a8a8a" stroke-width="0.6"/>
<rect x="747.8" y="430.69" width="6.9" height="18.01" fill="#fff" stroke="none" stroke-width="0" />
<text x="753.6" y="439.7" font-size="6.4" text-anchor="middle" fill="#1a1a1a" font-family="Liberation Sans" transform="rotate(-90 753.6 439.7)" >4,500</text>
<line x1="744.5" y1="459.7" x2="989.3" y2="459.7" stroke="#8a8a8a" stroke-width="0.8" />
<path d="M744.5 459.7 l-2.5 2.5 M744.5 459.7 l2.5 2.5 M744.5 459.7 l-2.5 -2.5 M744.5 459.7 l2.5 -2.5" stroke="#8a8a8a" stroke-width="0.6"/>
<path d="M913 459.7 l-2.5 2.5 M913 459.7 l2.5 2.5 M913 459.7 l-2.5 -2.5 M913 459.7 l2.5 -2.5" stroke="#8a8a8a" stroke-width="0.6"/>
<path d="M989.3 459.7 l-2.5 2.5 M989.3 459.7 l2.5 2.5 M989.3 459.7 l-2.5 -2.5 M989.3 459.7 l2.5 -2.5" stroke="#8a8a8a" stroke-width="0.6"/>
<rect x="817" y="451.5" width="24" height="7.2" fill="#fff" stroke="none" stroke-width="0" />
<text x="828.5" y="458" font-size="6.4" text-anchor="middle" fill="#1a1a1a" font-family="Liberation Sans" >5,325</text>
<rect x="941" y="451" width="24" height="7.2" fill="#fff" stroke="none" stroke-width="0" />
<text x="952.7" y="457.8" font-size="6.4" text-anchor="middle" fill="#1a1a1a" font-family="Liberation Sans" >2,300</text>
<line x1="744.5" y1="500.8" x2="935.1" y2="500.8" stroke="#8a8a8a" stroke-width="0.8" />
<path d="M744.5 500.8 l-2.5 2.5 M744.5 500.8 l2.5 2.5 M744.5 500.8 l-2.5 -2.5 M744.5 500.8 l2.5 -2.5" stroke="#8a8a8a" stroke-width="0.6"/>
<path d="M935.1 500.8 l-2.5 2.5 M935.1 500.8 l2.5 2.5 M935.1 500.8 l-2.5 -2.5 M935.1 500.8 l2.5 -2.5" stroke="#8a8a8a" stroke-width="0.6"/>
<rect x="831.19" y="493.2" width="18.01" height="6.9" fill="#fff" stroke="none" stroke-width="0" class="lb"/>
<text x="840.2" y="499" font-size="6.4" text-anchor="middle" fill="#1a1a1a" font-family="Liberation Sans" >6,025</text>
<line x1="927.1" y1="428" x2="927.1" y2="471.2" stroke="#8a8a8a" stroke-width="0.8" />
<path d="M927.1 428 l-2.5 2.5 M927.1 428 l2.5 2.5 M927.1 428 l-2.5 -2.5 M927.1 428 l2.5 -2.5" stroke="#8a8a8a" stroke-width="0.6"/>
<path d="M927.1 471.2 l-2.5 2.5 M927.1 471.2 l2.5 2.5 M927.1 471.2 l-2.5 -2.5 M927.1 471.2 l2.5 -2.5" stroke="#8a8a8a" stroke-width="0.6"/>
<rect x="919.5" y="439.99" width="6.9" height="18.01" fill="#fff" stroke="none" stroke-width="0" />
<text x="925.3" y="449" font-size="6.4" text-anchor="middle" fill="#1a1a1a" font-family="Liberation Sans" transform="rotate(-90 925.3 449)" >1,350</text>
<line x1="972.4" y1="428" x2="972.4" y2="512.4" stroke="#8a8a8a" stroke-width="0.8" />
<path d="M972.4 428 l-2.5 2.5 M972.4 428 l2.5 2.5 M972.4 428 l-2.5 -2.5 M972.4 428 l2.5 -2.5" stroke="#8a8a8a" stroke-width="0.6"/>
<path d="M972.4 512.4 l-2.5 2.5 M972.4 512.4 l2.5 2.5 M972.4 512.4 l-2.5 -2.5 M972.4 512.4 l2.5 -2.5" stroke="#8a8a8a" stroke-width="0.6"/>
<rect x="964.8" y="460.99" width="6.9" height="18.01" fill="#fff" stroke="none" stroke-width="0" />
<text x="970.6" y="470" font-size="6.4" text-anchor="middle" fill="#1a1a1a" font-family="Liberation Sans" transform="rotate(-90 970.6 470)" >2,650</text>
<line x1="938.7" y1="501.4" x2="989.3" y2="501.4" stroke="#8a8a8a" stroke-width="0.8" />
<path d="M938.7 501.4 l-2.5 2.5 M938.7 501.4 l2.5 2.5 M938.7 501.4 l-2.5 -2.5 M938.7 501.4 l2.5 -2.5" stroke="#8a8a8a" stroke-width="0.6"/>
<path d="M989.3 501.4 l-2.5 2.5 M989.3 501.4 l2.5 2.5 M989.3 501.4 l-2.5 -2.5 M989.3 501.4 l2.5 -2.5" stroke="#8a8a8a" stroke-width="0.6"/>
<rect x="955.29" y="493.8" width="18.01" height="6.9" fill="#fff" stroke="none" stroke-width="0" class="lb"/>
<text x="964.3" y="499.6" font-size="6.4" text-anchor="middle" fill="#1a1a1a" font-family="Liberation Sans" >1,600</text>
<line x1="1031.2" y1="436.3" x2="1031.2" y2="512.4" stroke="#8a8a8a" stroke-width="0.8" />
<path d="M1031.2 436.3 l-2.5 2.5 M1031.2 436.3 l2.5 2.5 M1031.2 436.3 l-2.5 -2.5 M1031.2 436.3 l2.5 -2.5" stroke="#8a8a8a" stroke-width="0.6"/>
<path d="M1031.2 512.4 l-2.5 2.5 M1031.2 512.4 l2.5 2.5 M1031.2 512.4 l-2.5 -2.5 M1031.2 512.4 l2.5 -2.5" stroke="#8a8a8a" stroke-width="0.6"/>
<rect x="1023.6" y="464.99" width="6.9" height="18.01" fill="#fff" stroke="none" stroke-width="0" />
<text x="1029.4" y="474" font-size="6.4" text-anchor="middle" fill="#1a1a1a" font-family="Liberation Sans" transform="rotate(-90 1029.4 474)" >2,400</text>
<line x1="1001.5" y1="500.8" x2="1111.5" y2="500.8" stroke="#8a8a8a" stroke-width="0.8" />
<path d="M1001.5 500.8 l-2.5 2.5 M1001.5 500.8 l2.5 2.5 M1001.5 500.8 l-2.5 -2.5 M1001.5 500.8 l2.5 -2.5" stroke="#8a8a8a" stroke-width="0.6"/>
<path d="M1111.5 500.8 l-2.5 2.5 M1111.5 500.8 l2.5 2.5 M1111.5 500.8 l-2.5 -2.5 M1111.5 500.8 l2.5 -2.5" stroke="#8a8a8a" stroke-width="0.6"/>
<rect x="1047.69" y="493.2" width="18.01" height="6.9" fill="#fff" stroke="none" stroke-width="0" class="lb"/>
<text x="1056.7" y="499" font-size="6.4" text-anchor="middle" fill="#1a1a1a" font-family="Liberation Sans" >3,525</text>
<line x1="916.5" y1="412.9" x2="1008.4" y2="412.9" stroke="#8a8a8a" stroke-width="0.8" />
<path d="M916.5 412.9 l-2.5 2.5 M916.5 412.9 l2.5 2.5 M916.5 412.9 l-2.5 -2.5 M916.5 412.9 l2.5 -2.5" stroke="#8a8a8a" stroke-width="0.6"/>
<path d="M1008.4 412.9 l-2.5 2.5 M1008.4 412.9 l2.5 2.5 M1008.4 412.9 l-2.5 -2.5 M1008.4 412.9 l2.5 -2.5" stroke="#8a8a8a" stroke-width="0.6"/>
<rect x="952.99" y="405.3" width="18.01" height="6.9" fill="#fff" stroke="none" stroke-width="0" class="lb"/>
<text x="962" y="411.1" font-size="6.4" text-anchor="middle" fill="#1a1a1a" font-family="Liberation Sans" >2,900</text>
<line x1="972.3" y1="328" x2="972.3" y2="424.5" stroke="#8a8a8a" stroke-width="0.8" />
<path d="M972.3 328 l-2.5 2.5 M972.3 328 l2.5 2.5 M972.3 328 l-2.5 -2.5 M972.3 328 l2.5 -2.5" stroke="#8a8a8a" stroke-width="0.6"/>
<path d="M972.3 424.5 l-2.5 2.5 M972.3 424.5 l2.5 2.5 M972.3 424.5 l-2.5 -2.5 M972.3 424.5 l2.5 -2.5" stroke="#8a8a8a" stroke-width="0.6"/>
<rect x="964.7" y="362.99" width="6.9" height="18.01" fill="#fff" stroke="none" stroke-width="0" />
<text x="970.5" y="372" font-size="6.4" text-anchor="middle" fill="#1a1a1a" font-family="Liberation Sans" transform="rotate(-90 970.5 372)" >3,050</text>
<line x1="1028.1" y1="316.4" x2="1028.1" y2="413.5" stroke="#8a8a8a" stroke-width="0.8" />
<path d="M1028.1 316.4 l-2.5 2.5 M1028.1 316.4 l2.5 2.5 M1028.1 316.4 l-2.5 -2.5 M1028.1 316.4 l2.5 -2.5" stroke="#8a8a8a" stroke-width="0.6"/>
<path d="M1028.1 413.5 l-2.5 2.5 M1028.1 413.5 l2.5 2.5 M1028.1 413.5 l-2.5 -2.5 M1028.1 413.5 l2.5 -2.5" stroke="#8a8a8a" stroke-width="0.6"/>
<rect x="1020.5" y="362.99" width="6.9" height="18.01" fill="#fff" stroke="none" stroke-width="0" />
<text x="1026.3" y="372" font-size="6.4" text-anchor="middle" fill="#1a1a1a" font-family="Liberation Sans" transform="rotate(-90 1026.3 372)" >3,750</text>
<line x1="1041" y1="316.5" x2="1041" y2="512.4" stroke="#8c8c8c" stroke-width="0.6" />
<rect x="1038" y="395" width="9" height="36" fill="#fff" stroke="none" stroke-width="0" />
<text x="1037.5" y="422" font-size="6.5" text-anchor="middle" fill="#1a1a1a" font-family="Liberation Sans" transform="rotate(-90 1037.5 422)" >3,150</text>
<text x="1044.5" y="413" font-size="6.5" text-anchor="middle" fill="#1a1a1a" font-family="Liberation Sans" transform="rotate(-90 1044.5 413)" >PROPOSED</text>
<line x1="742.3" y1="536.2" x2="913.4" y2="536.2" stroke="#8a8a8a" stroke-width="0.8" />
<path d="M742.3 536.2 l-2.5 2.5 M742.3 536.2 l2.5 2.5 M742.3 536.2 l-2.5 -2.5 M742.3 536.2 l2.5 -2.5" stroke="#8a8a8a" stroke-width="0.6"/>
<path d="M913.4 536.2 l-2.5 2.5 M913.4 536.2 l2.5 2.5 M913.4 536.2 l-2.5 -2.5 M913.4 536.2 l2.5 -2.5" stroke="#8a8a8a" stroke-width="0.6"/>
<rect x="818.89" y="528.6" width="18.01" height="6.9" fill="#fff" stroke="none" stroke-width="0" class="lb"/>
<text x="827.9" y="534.4" font-size="6.4" text-anchor="middle" fill="#1a1a1a" font-family="Liberation Sans" >5,375</text>
<line x1="742.3" y1="608.5" x2="986.9" y2="608.5" stroke="#8a8a8a" stroke-width="0.8" />
<path d="M742.3 608.5 l-2.5 2.5 M742.3 608.5 l2.5 2.5 M742.3 608.5 l-2.5 -2.5 M742.3 608.5 l2.5 -2.5" stroke="#8a8a8a" stroke-width="0.6"/>
<path d="M986.9 608.5 l-2.5 2.5 M986.9 608.5 l2.5 2.5 M986.9 608.5 l-2.5 -2.5 M986.9 608.5 l2.5 -2.5" stroke="#8a8a8a" stroke-width="0.6"/>
<rect x="828.59" y="600.9" width="18.01" height="6.9" fill="#fff" stroke="none" stroke-width="0" class="lb"/>
<text x="837.6" y="606.7" font-size="6.4" text-anchor="middle" fill="#1a1a1a" font-family="Liberation Sans" >5,975</text>
<line x1="742.3" y1="643.4" x2="913.4" y2="643.4" stroke="#8a8a8a" stroke-width="0.8" />
<path d="M742.3 643.4 l-2.5 2.5 M742.3 643.4 l2.5 2.5 M742.3 643.4 l-2.5 -2.5 M742.3 643.4 l2.5 -2.5" stroke="#8a8a8a" stroke-width="0.6"/>
<path d="M913.4 643.4 l-2.5 2.5 M913.4 643.4 l2.5 2.5 M913.4 643.4 l-2.5 -2.5 M913.4 643.4 l2.5 -2.5" stroke="#8a8a8a" stroke-width="0.6"/>
<rect x="818.89" y="635.8" width="18.01" height="6.9" fill="#fff" stroke="none" stroke-width="0" class="lb"/>
<text x="827.9" y="641.6" font-size="6.4" text-anchor="middle" fill="#1a1a1a" font-family="Liberation Sans" >5,375</text>
<line x1="753.3" y1="521.9" x2="753.3" y2="666.4" stroke="#8a8a8a" stroke-width="0.8" />
<path d="M753.3 521.9 l-2.5 2.5 M753.3 521.9 l2.5 2.5 M753.3 521.9 l-2.5 -2.5 M753.3 521.9 l2.5 -2.5" stroke="#8a8a8a" stroke-width="0.6"/>
<path d="M753.3 666.4 l-2.5 2.5 M753.3 666.4 l2.5 2.5 M753.3 666.4 l-2.5 -2.5 M753.3 666.4 l2.5 -2.5" stroke="#8a8a8a" stroke-width="0.6"/>
<rect x="745.7" y="585.99" width="6.9" height="18.01" fill="#fff" stroke="none" stroke-width="0" />
<text x="751.5" y="595" font-size="6.4" text-anchor="middle" fill="#1a1a1a" font-family="Liberation Sans" transform="rotate(-90 751.5 595)" >4,575</text>
<line x1="753.3" y1="670.2" x2="753.3" y2="797.4" stroke="#8a8a8a" stroke-width="0.8" />
<path d="M753.3 670.2 l-2.5 2.5 M753.3 670.2 l2.5 2.5 M753.3 670.2 l-2.5 -2.5 M753.3 670.2 l2.5 -2.5" stroke="#8a8a8a" stroke-width="0.6"/>
<path d="M753.3 797.4 l-2.5 2.5 M753.3 797.4 l2.5 2.5 M753.3 797.4 l-2.5 -2.5 M753.3 797.4 l2.5 -2.5" stroke="#8a8a8a" stroke-width="0.6"/>
<rect x="745.7" y="723.99" width="6.9" height="18.01" fill="#fff" stroke="none" stroke-width="0" />
<text x="751.5" y="733" font-size="6.4" text-anchor="middle" fill="#1a1a1a" font-family="Liberation Sans" transform="rotate(-90 751.5 733)" >4,000</text>
<line x1="742.3" y1="786" x2="875.5" y2="786" stroke="#8a8a8a" stroke-width="0.8" />
<path d="M742.3 786 l-2.5 2.5 M742.3 786 l2.5 2.5 M742.3 786 l-2.5 -2.5 M742.3 786 l2.5 -2.5" stroke="#8a8a8a" stroke-width="0.6"/>
<path d="M875.5 786 l-2.5 2.5 M875.5 786 l2.5 2.5 M875.5 786 l-2.5 -2.5 M875.5 786 l2.5 -2.5" stroke="#8a8a8a" stroke-width="0.6"/>
<rect x="799.99" y="778.4" width="18.01" height="6.9" fill="#fff" stroke="none" stroke-width="0" class="lb"/>
<text x="809" y="784.2" font-size="6.4" text-anchor="middle" fill="#1a1a1a" font-family="Liberation Sans" >4,175</text>
<line x1="878.8" y1="786" x2="967" y2="786" stroke="#8a8a8a" stroke-width="0.8" />
<path d="M878.8 786 l-2.5 2.5 M878.8 786 l2.5 2.5 M878.8 786 l-2.5 -2.5 M878.8 786 l2.5 -2.5" stroke="#8a8a8a" stroke-width="0.6"/>
<path d="M967 786 l-2.5 2.5 M967 786 l2.5 2.5 M967 786 l-2.5 -2.5 M967 786 l2.5 -2.5" stroke="#8a8a8a" stroke-width="0.6"/>
<rect x="912.99" y="778.4" width="18.01" height="6.9" fill="#fff" stroke="none" stroke-width="0" class="lb"/>
<text x="922" y="784.2" font-size="6.4" text-anchor="middle" fill="#1a1a1a" font-family="Liberation Sans" >2,800</text>
<line x1="970.8" y1="786" x2="1103.6" y2="786" stroke="#8a8a8a" stroke-width="0.8" />
<path d="M970.8 786 l-2.5 2.5 M970.8 786 l2.5 2.5 M970.8 786 l-2.5 -2.5 M970.8 786 l2.5 -2.5" stroke="#8a8a8a" stroke-width="0.6"/>
<path d="M1103.6 786 l-2.5 2.5 M1103.6 786 l2.5 2.5 M1103.6 786 l-2.5 -2.5 M1103.6 786 l2.5 -2.5" stroke="#8a8a8a" stroke-width="0.6"/>
<rect x="1027.49" y="778.4" width="18.01" height="6.9" fill="#fff" stroke="none" stroke-width="0" class="lb"/>
<text x="1036.5" y="784.2" font-size="6.4" text-anchor="middle" fill="#1a1a1a" font-family="Liberation Sans" >4,175</text>
<line x1="956.3" y1="657.8" x2="956.3" y2="797.4" stroke="#8a8a8a" stroke-width="0.8" />
<path d="M956.3 657.8 l-2.5 2.5 M956.3 657.8 l2.5 2.5 M956.3 657.8 l-2.5 -2.5 M956.3 657.8 l2.5 -2.5" stroke="#8a8a8a" stroke-width="0.6"/>
<path d="M956.3 797.4 l-2.5 2.5 M956.3 797.4 l2.5 2.5 M956.3 797.4 l-2.5 -2.5 M956.3 797.4 l2.5 -2.5" stroke="#8a8a8a" stroke-width="0.6"/>
<rect x="948.7" y="727.99" width="6.9" height="18.01" fill="#fff" stroke="none" stroke-width="0" />
<text x="954.5" y="737" font-size="6.4" text-anchor="middle" fill="#1a1a1a" font-family="Liberation Sans" transform="rotate(-90 954.5 737)" >5,050</text>
<line x1="1092.3" y1="657.5" x2="1092.3" y2="797.7" stroke="#8a8a8a" stroke-width="0.8" />
<path d="M1092.3 657.5 l-2.5 2.5 M1092.3 657.5 l2.5 2.5 M1092.3 657.5 l-2.5 -2.5 M1092.3 657.5 l2.5 -2.5" stroke="#8a8a8a" stroke-width="0.6"/>
<path d="M1092.3 797.7 l-2.5 2.5 M1092.3 797.7 l2.5 2.5 M1092.3 797.7 l-2.5 -2.5 M1092.3 797.7 l2.5 -2.5" stroke="#8a8a8a" stroke-width="0.6"/>
<rect x="1084.7" y="719.39" width="6.9" height="18.01" fill="#fff" stroke="none" stroke-width="0" />
<text x="1090.5" y="728.4" font-size="6.4" text-anchor="middle" fill="#1a1a1a" font-family="Liberation Sans" transform="rotate(-90 1090.5 728.4)" >4,400</text>
<line x1="916.3" y1="535.9" x2="986.9" y2="535.9" stroke="#8a8a8a" stroke-width="0.8" />
<path d="M916.3 535.9 l-2.5 2.5 M916.3 535.9 l2.5 2.5 M916.3 535.9 l-2.5 -2.5 M916.3 535.9 l2.5 -2.5" stroke="#8a8a8a" stroke-width="0.6"/>
<path d="M986.9 535.9 l-2.5 2.5 M986.9 535.9 l2.5 2.5 M986.9 535.9 l-2.5 -2.5 M986.9 535.9 l2.5 -2.5" stroke="#8a8a8a" stroke-width="0.6"/>
<rect x="941.99" y="528.3" width="18.01" height="6.9" fill="#fff" stroke="none" stroke-width="0" class="lb"/>
<text x="951" y="534.1" font-size="6.4" text-anchor="middle" fill="#1a1a1a" font-family="Liberation Sans" >2,200</text>
<line x1="972.7" y1="521.7" x2="972.7" y2="619.4" stroke="#8a8a8a" stroke-width="0.8" />
<path d="M972.7 521.7 l-2.5 2.5 M972.7 521.7 l2.5 2.5 M972.7 521.7 l-2.5 -2.5 M972.7 521.7 l2.5 -2.5" stroke="#8a8a8a" stroke-width="0.6"/>
<path d="M972.7 619.4 l-2.5 2.5 M972.7 619.4 l2.5 2.5 M972.7 619.4 l-2.5 -2.5 M972.7 619.4 l2.5 -2.5" stroke="#8a8a8a" stroke-width="0.6"/>
<rect x="965.1" y="561.69" width="6.9" height="18.01" fill="#fff" stroke="none" stroke-width="0" />
<text x="970.9" y="570.7" font-size="6.4" text-anchor="middle" fill="#1a1a1a" font-family="Liberation Sans" transform="rotate(-90 970.9 570.7)" >3,075</text>
<line x1="935.6" y1="608.5" x2="986.9" y2="608.5" stroke="#8a8a8a" stroke-width="0.8" />
<path d="M935.6 608.5 l-2.5 2.5 M935.6 608.5 l2.5 2.5 M935.6 608.5 l-2.5 -2.5 M935.6 608.5 l2.5 -2.5" stroke="#8a8a8a" stroke-width="0.6"/>
<path d="M986.9 608.5 l-2.5 2.5 M986.9 608.5 l2.5 2.5 M986.9 608.5 l-2.5 -2.5 M986.9 608.5 l2.5 -2.5" stroke="#8a8a8a" stroke-width="0.6"/>
<rect x="951.99" y="600.9" width="18.01" height="6.9" fill="#fff" stroke="none" stroke-width="0" class="lb"/>
<text x="961" y="606.7" font-size="6.4" text-anchor="middle" fill="#1a1a1a" font-family="Liberation Sans" >1,600</text>
<line x1="989.8" y1="536.8" x2="1103.6" y2="536.8" stroke="#8a8a8a" stroke-width="0.8" />
<path d="M989.8 536.8 l-2.5 2.5 M989.8 536.8 l2.5 2.5 M989.8 536.8 l-2.5 -2.5 M989.8 536.8 l2.5 -2.5" stroke="#8a8a8a" stroke-width="0.6"/>
<path d="M1103.6 536.8 l-2.5 2.5 M1103.6 536.8 l2.5 2.5 M1103.6 536.8 l-2.5 -2.5 M1103.6 536.8 l2.5 -2.5" stroke="#8a8a8a" stroke-width="0.6"/>
<rect x="1037.29" y="529.2" width="18.01" height="6.9" fill="#fff" stroke="none" stroke-width="0" class="lb"/>
<text x="1046.3" y="535" font-size="6.4" text-anchor="middle" fill="#1a1a1a" font-family="Liberation Sans" >3,575</text>
<line x1="1022.1" y1="521.7" x2="1022.1" y2="594" stroke="#8a8a8a" stroke-width="0.8" />
<path d="M1022.1 521.7 l-2.5 2.5 M1022.1 521.7 l2.5 2.5 M1022.1 521.7 l-2.5 -2.5 M1022.1 521.7 l2.5 -2.5" stroke="#8a8a8a" stroke-width="0.6"/>
<path d="M1022.1 594 l-2.5 2.5 M1022.1 594 l2.5 2.5 M1022.1 594 l-2.5 -2.5 M1022.1 594 l2.5 -2.5" stroke="#8a8a8a" stroke-width="0.6"/>
<rect x="1014.5" y="555.99" width="6.9" height="18.01" fill="#fff" stroke="none" stroke-width="0" />
<text x="1020.3" y="565" font-size="6.4" text-anchor="middle" fill="#1a1a1a" font-family="Liberation Sans" transform="rotate(-90 1020.3 565)" >2,725</text>
<line x1="1092.8" y1="521.7" x2="1092.8" y2="594" stroke="#8a8a8a" stroke-width="0.8" />
<path d="M1092.8 521.7 l-2.5 2.5 M1092.8 521.7 l2.5 2.5 M1092.8 521.7 l-2.5 -2.5 M1092.8 521.7 l2.5 -2.5" stroke="#8a8a8a" stroke-width="0.6"/>
<path d="M1092.8 594 l-2.5 2.5 M1092.8 594 l2.5 2.5 M1092.8 594 l-2.5 -2.5 M1092.8 594 l2.5 -2.5" stroke="#8a8a8a" stroke-width="0.6"/>
<rect x="1085.2" y="548.99" width="6.9" height="18.01" fill="#fff" stroke="none" stroke-width="0" />
<text x="1091" y="558" font-size="6.4" text-anchor="middle" fill="#1a1a1a" font-family="Liberation Sans" transform="rotate(-90 1091 558)" >2,275</text>
<line x1="989.8" y1="596.9" x2="1030" y2="596.9" stroke="#8a8a8a" stroke-width="0.8" />
<path d="M989.8 596.9 l-2.5 2.5 M989.8 596.9 l2.5 2.5 M989.8 596.9 l-2.5 -2.5 M989.8 596.9 l2.5 -2.5" stroke="#8a8a8a" stroke-width="0.6"/>
<path d="M1030 596.9 l-2.5 2.5 M1030 596.9 l2.5 2.5 M1030 596.9 l-2.5 -2.5 M1030 596.9 l2.5 -2.5" stroke="#8a8a8a" stroke-width="0.6"/>
<rect x="1000.49" y="589.3" width="18.01" height="6.9" fill="#fff" stroke="none" stroke-width="0" class="lb"/>
<text x="1009.5" y="595.1" font-size="6.4" text-anchor="middle" fill="#1a1a1a" font-family="Liberation Sans" >1,270</text>
<line x1="1092.8" y1="598" x2="1092.8" y2="654" stroke="#8a8a8a" stroke-width="0.8" />
<path d="M1092.8 598 l-2.5 2.5 M1092.8 598 l2.5 2.5 M1092.8 598 l-2.5 -2.5 M1092.8 598 l2.5 -2.5" stroke="#8a8a8a" stroke-width="0.6"/>
<path d="M1092.8 654 l-2.5 2.5 M1092.8 654 l2.5 2.5 M1092.8 654 l-2.5 -2.5 M1092.8 654 l2.5 -2.5" stroke="#8a8a8a" stroke-width="0.6"/>
<rect x="1085.2" y="616.99" width="6.9" height="18.01" fill="#fff" stroke="none" stroke-width="0" />
<text x="1091" y="626" font-size="6.4" text-anchor="middle" fill="#1a1a1a" font-family="Liberation Sans" transform="rotate(-90 1091 626)" >1,800</text>
<line x1="1034" y1="643.4" x2="1103.6" y2="643.4" stroke="#8a8a8a" stroke-width="0.8" />
<path d="M1034 643.4 l-2.5 2.5 M1034 643.4 l2.5 2.5 M1034 643.4 l-2.5 -2.5 M1034 643.4 l2.5 -2.5" stroke="#8a8a8a" stroke-width="0.6"/>
<path d="M1103.6 643.4 l-2.5 2.5 M1103.6 643.4 l2.5 2.5 M1103.6 643.4 l-2.5 -2.5 M1103.6 643.4 l2.5 -2.5" stroke="#8a8a8a" stroke-width="0.6"/>
<rect x="1058.59" y="635.8" width="18.01" height="6.9" fill="#fff" stroke="none" stroke-width="0" class="lb"/>
<text x="1067.6" y="641.6" font-size="6.4" text-anchor="middle" fill="#1a1a1a" font-family="Liberation Sans" >2,205</text>
<line x1="970" y1="643.4" x2="1030" y2="643.4" stroke="#8a8a8a" stroke-width="0.8" />
<path d="M970 643.4 l-2.5 2.5 M970 643.4 l2.5 2.5 M970 643.4 l-2.5 -2.5 M970 643.4 l2.5 -2.5" stroke="#8a8a8a" stroke-width="0.6"/>
<path d="M1030 643.4 l-2.5 2.5 M1030 643.4 l2.5 2.5 M1030 643.4 l-2.5 -2.5 M1030 643.4 l2.5 -2.5" stroke="#8a8a8a" stroke-width="0.6"/>
<rect x="990.79" y="635.8" width="18.01" height="6.9" fill="#fff" stroke="none" stroke-width="0" class="lb"/>
<text x="999.8" y="641.6" font-size="6.4" text-anchor="middle" fill="#1a1a1a" font-family="Liberation Sans" >1,870</text>
<line x1="1022.1" y1="598" x2="1022.1" y2="654" stroke="#8a8a8a" stroke-width="0.8" />
<path d="M1022.1 598 l-2.5 2.5 M1022.1 598 l2.5 2.5 M1022.1 598 l-2.5 -2.5 M1022.1 598 l2.5 -2.5" stroke="#8a8a8a" stroke-width="0.6"/>
<path d="M1022.1 654 l-2.5 2.5 M1022.1 654 l2.5 2.5 M1022.1 654 l-2.5 -2.5 M1022.1 654 l2.5 -2.5" stroke="#8a8a8a" stroke-width="0.6"/>
<rect x="1014.5" y="624.69" width="6.9" height="18.01" fill="#fff" stroke="none" stroke-width="0" />
<text x="1020.3" y="633.7" font-size="6.4" text-anchor="middle" fill="#1a1a1a" font-family="Liberation Sans" transform="rotate(-90 1020.3 633.7)" >1,350</text>
<line x1="956.2" y1="622.6" x2="956.2" y2="654" stroke="#8a8a8a" stroke-width="0.8" />
<path d="M956.2 622.6 l-2.5 2.5 M956.2 622.6 l2.5 2.5 M956.2 622.6 l-2.5 -2.5 M956.2 622.6 l2.5 -2.5" stroke="#8a8a8a" stroke-width="0.6"/>
<path d="M956.2 654 l-2.5 2.5 M956.2 654 l2.5 2.5 M956.2 654 l-2.5 -2.5 M956.2 654 l2.5 -2.5" stroke="#8a8a8a" stroke-width="0.6"/>
<rect x="948.6" y="629.59" width="6.9" height="18.01" fill="#fff" stroke="none" stroke-width="0" />
<text x="954.4" y="638.6" font-size="6.4" text-anchor="middle" fill="#1a1a1a" font-family="Liberation Sans" transform="rotate(-90 954.4 638.6)" >1,000</text>
<line x1="721.4" y1="512.3" x2="721.4" y2="807.5" stroke="#8a8a8a" stroke-width="0.8" />
<path d="M721.4 512.3 l-2.5 2.5 M721.4 512.3 l2.5 2.5 M721.4 512.3 l-2.5 -2.5 M721.4 512.3 l2.5 -2.5" stroke="#8a8a8a" stroke-width="0.6"/>
<path d="M721.4 807.5 l-2.5 2.5 M721.4 807.5 l2.5 2.5 M721.4 807.5 l-2.5 -2.5 M721.4 807.5 l2.5 -2.5" stroke="#8a8a8a" stroke-width="0.6"/>
<rect x="714" y="620" width="17" height="66" fill="#fff" stroke="none" stroke-width="0" />
<text x="720" y="653" font-size="6.4" text-anchor="middle" fill="#1a1a1a" font-family="Liberation Sans" transform="rotate(-90 720 653)" >9,700</text>
<text x="727.3" y="653" font-size="6.4" text-anchor="middle" fill="#1a1a1a" font-family="Liberation Sans" transform="rotate(-90 727.3 653)" >EXISTING</text>
<line x1="1123.9" y1="512.3" x2="1123.9" y2="807.4" stroke="#8a8a8a" stroke-width="0.8" />
<path d="M1123.9 512.3 l-2.5 2.5 M1123.9 512.3 l2.5 2.5 M1123.9 512.3 l-2.5 -2.5 M1123.9 512.3 l2.5 -2.5" stroke="#8a8a8a" stroke-width="0.6"/>
<path d="M1123.9 807.4 l-2.5 2.5 M1123.9 807.4 l2.5 2.5 M1123.9 807.4 l-2.5 -2.5 M1123.9 807.4 l2.5 -2.5" stroke="#8a8a8a" stroke-width="0.6"/>
<rect x="1116.3" y="650.99" width="6.9" height="18.01" fill="#fff" stroke="none" stroke-width="0" />
<text x="1122.1" y="660" font-size="6.4" text-anchor="middle" fill="#1a1a1a" font-family="Liberation Sans" transform="rotate(-90 1122.1 660)" >9,275</text>
<line x1="1135" y1="512.3" x2="1135" y2="826" stroke="#8a8a8a" stroke-width="0.8" />
<path d="M1135 512.3 l-2.5 2.5 M1135 512.3 l2.5 2.5 M1135 512.3 l-2.5 -2.5 M1135 512.3 l2.5 -2.5" stroke="#8a8a8a" stroke-width="0.6"/>
<path d="M1135 826 l-2.5 2.5 M1135 826 l2.5 2.5 M1135 826 l-2.5 -2.5 M1135 826 l2.5 -2.5" stroke="#8a8a8a" stroke-width="0.6"/>
<rect x="1127.4" y="660.99" width="6.9" height="18.01" fill="#fff" stroke="none" stroke-width="0" />
<text x="1133.2" y="670" font-size="6.4" text-anchor="middle" fill="#1a1a1a" font-family="Liberation Sans" transform="rotate(-90 1133.2 670)" >9,925</text>
<line x1="1113.4" y1="512.3" x2="1140" y2="512.3" stroke="#8c8c8c" stroke-width="0.6" />
<line x1="1123.9" y1="807.4" x2="1123.9" y2="826" stroke="#8a8a8a" stroke-width="0.8" />
<path d="M1123.9 807.4 l-2.5 2.5 M1123.9 807.4 l2.5 2.5 M1123.9 807.4 l-2.5 -2.5 M1123.9 807.4 l2.5 -2.5" stroke="#8a8a8a" stroke-width="0.6"/>
<path d="M1123.9 826 l-2.5 2.5 M1123.9 826 l2.5 2.5 M1123.9 826 l-2.5 -2.5 M1123.9 826 l2.5 -2.5" stroke="#8a8a8a" stroke-width="0.6"/>
<rect x="1116.3" y="810.66" width="6.9" height="12.68" fill="#fff" stroke="none" stroke-width="0" />
<text x="1122.1" y="817" font-size="6.4" text-anchor="middle" fill="#1a1a1a" font-family="Liberation Sans" transform="rotate(-90 1122.1 817)" >650</text>
<line x1="1118" y1="826" x2="1140" y2="826" stroke="#8c8c8c" stroke-width="0.6" />
<line x1="732.5" y1="838.8" x2="869" y2="838.8" stroke="#8a8a8a" stroke-width="0.8" />
<path d="M732.5 838.8 l-2.5 2.5 M732.5 838.8 l2.5 2.5 M732.5 838.8 l-2.5 -2.5 M732.5 838.8 l2.5 -2.5" stroke="#8a8a8a" stroke-width="0.6"/>
<path d="M869 838.8 l-2.5 2.5 M869 838.8 l2.5 2.5 M869 838.8 l-2.5 -2.5 M869 838.8 l2.5 -2.5" stroke="#8a8a8a" stroke-width="0.6"/>
<rect x="791.69" y="831.2" width="18.01" height="6.9" fill="#fff" stroke="none" stroke-width="0" class="lb"/>
<text x="800.7" y="837" font-size="6.4" text-anchor="middle" fill="#1a1a1a" font-family="Liberation Sans" >4,275</text>
<line x1="869" y1="838.8" x2="977.6" y2="838.8" stroke="#8a8a8a" stroke-width="0.8" />
<path d="M869 838.8 l-2.5 2.5 M869 838.8 l2.5 2.5 M869 838.8 l-2.5 -2.5 M869 838.8 l2.5 -2.5" stroke="#8a8a8a" stroke-width="0.6"/>
<path d="M977.6 838.8 l-2.5 2.5 M977.6 838.8 l2.5 2.5 M977.6 838.8 l-2.5 -2.5 M977.6 838.8 l2.5 -2.5" stroke="#8a8a8a" stroke-width="0.6"/>
<rect x="912.99" y="831.2" width="18.01" height="6.9" fill="#fff" stroke="none" stroke-width="0" class="lb"/>
<text x="922" y="837" font-size="6.4" text-anchor="middle" fill="#1a1a1a" font-family="Liberation Sans" >3,400</text>
<line x1="977.6" y1="838.8" x2="1113.4" y2="838.8" stroke="#8a8a8a" stroke-width="0.8" />
<path d="M977.6 838.8 l-2.5 2.5 M977.6 838.8 l2.5 2.5 M977.6 838.8 l-2.5 -2.5 M977.6 838.8 l2.5 -2.5" stroke="#8a8a8a" stroke-width="0.6"/>
<path d="M1113.4 838.8 l-2.5 2.5 M1113.4 838.8 l2.5 2.5 M1113.4 838.8 l-2.5 -2.5 M1113.4 838.8 l2.5 -2.5" stroke="#8a8a8a" stroke-width="0.6"/>
<rect x="1035.69" y="831.2" width="18.01" height="6.9" fill="#fff" stroke="none" stroke-width="0" class="lb"/>
<text x="1044.7" y="837" font-size="6.4" text-anchor="middle" fill="#1a1a1a" font-family="Liberation Sans" >4,275</text>
<line x1="732.5" y1="849.6" x2="1113.4" y2="849.6" stroke="#8a8a8a" stroke-width="0.8" />
<path d="M732.5 849.6 l-2.5 2.5 M732.5 849.6 l2.5 2.5 M732.5 849.6 l-2.5 -2.5 M732.5 849.6 l2.5 -2.5" stroke="#8a8a8a" stroke-width="0.6"/>
<path d="M1113.4 849.6 l-2.5 2.5 M1113.4 849.6 l2.5 2.5 M1113.4 849.6 l-2.5 -2.5 M1113.4 849.6 l2.5 -2.5" stroke="#8a8a8a" stroke-width="0.6"/>
<rect x="902" y="841" width="40" height="16" fill="#fff" stroke="none" stroke-width="0" />
<text x="922" y="849" font-size="6.4" text-anchor="middle" fill="#1a1a1a" font-family="Liberation Sans" >11,950</text>
<text x="922" y="856.5" font-size="6.4" text-anchor="middle" fill="#1a1a1a" font-family="Liberation Sans" >EXISTING</text>
<line x1="732.5" y1="832" x2="732.5" y2="852" stroke="#8c8c8c" stroke-width="0.6" />
<line x1="1113.4" y1="832" x2="1113.4" y2="852" stroke="#8c8c8c" stroke-width="0.6" />
<path d="M729.7 226.8 L744.2 226.8 L744.5 369.3 L732.5 369.3 L732.5 283 L729.7 283 Z" fill="#ebebeb" stroke="#2a2a2a" stroke-width="1" />
<rect x="624.5" y="283" width="108" height="11" fill="#ebebeb" stroke="#2a2a2a" stroke-width="1" />
<rect x="562.5" y="344" width="12" height="155.3" fill="#ebebeb" stroke="#2a2a2a" stroke-width="1" />
<rect x="562.5" y="487.5" width="57.5" height="11.8" fill="#ebebeb" stroke="#2a2a2a" stroke-width="1" />
<rect x="686.8" y="487.5" width="45.7" height="11.8" fill="#ebebeb" stroke="#2a2a2a" stroke-width="1" />
<rect x="620" y="487.5" width="66.8" height="11.8" fill="#fff" stroke="#2a2a2a" stroke-width="0.8" />
<line x1="621" y1="494.5" x2="686" y2="494.5" stroke="#111" stroke-width="2" />
<rect x="732.5" y="455.2" width="12" height="57.1" fill="#ebebeb" stroke="#2a2a2a" stroke-width="1" />
<rect x="562.5" y="283" width="12" height="61" fill="#fff" stroke="none" stroke-width="0" />
<line x1="566.6" y1="286.5" x2="624.5" y2="286.5" stroke="#1a1a1a" stroke-width="2.4" />
<line x1="566.6" y1="286.5" x2="566.6" y2="344" stroke="#1a1a1a" stroke-width="2.4" />
<line x1="574.5" y1="294" x2="624.5" y2="294" stroke="#2a2a2a" stroke-width="1" />
<line x1="574.5" y1="294" x2="574.5" y2="344" stroke="#2a2a2a" stroke-width="1" />
<rect x="744.5" y="358.6" width="20.1" height="10.7" fill="#ebebeb" stroke="#2a2a2a" stroke-width="1" />
<rect x="884.7" y="358.6" width="20.8" height="10.7" fill="#ebebeb" stroke="#2a2a2a" stroke-width="1" />
<line x1="768" y1="365.5" x2="822" y2="365.5" stroke="#111" stroke-width="1.5" />
<line x1="795" y1="363.6" x2="852" y2="363.6" stroke="#111" stroke-width="1.5" />
<rect x="766" y="364.3" width="3" height="2.7" fill="#fff" stroke="#111" stroke-width="0.6" />
<rect x="820.5" y="364.3" width="3.5" height="2.7" fill="#fff" stroke="#111" stroke-width="0.6" />
<rect x="793.5" y="362.3" width="3.5" height="2.7" fill="#fff" stroke="#111" stroke-width="0.6" />
<rect x="850.5" y="362.3" width="3.5" height="2.7" fill="#fff" stroke="#111" stroke-width="0.6" />
<path d="M905.5 316.4 L1020.5 316.4 L1020.5 347.2 L1008.4 347.2 L1008.4 328 L916.5 328 L916.5 358 L905.5 358 Z" fill="#ebebeb" stroke="#2a2a2a" stroke-width="1" />
<rect x="905.5" y="397.2" width="11" height="31.4" fill="#ebebeb" stroke="#2a2a2a" stroke-width="1" />
<path d="M1008.4 405.3 L1020.5 405.3 L1020.5 436.3 L1001.5 436.3 L1001.5 479.3 L989.3 479.3 L989.3 428.6 L969.4 428.6 L969.4 424.5 L1008.4 424.5 Z" fill="#ebebeb" stroke="#2a2a2a" stroke-width="1" />
<rect x="905.5" y="424.5" width="37.2" height="4.1" fill="#ebebeb" stroke="#2a2a2a" stroke-width="1" />
<rect x="1008.4" y="347.2" width="12.1" height="58.1" fill="#fff" stroke="#2a2a2a" stroke-width="0.8" />
<line x1="1016" y1="348" x2="1016" y2="404" stroke="#111" stroke-width="2" />
<line x1="1020.5" y1="436.3" x2="1036.9" y2="436.3" stroke="#2a2a2a" stroke-width="1" />
<line x1="968.8" y1="397" x2="968.8" y2="424" stroke="#111" stroke-width="2" />
<path d="M942.7 426 A26 26 0 0 1 968.8 399" fill="none" stroke="#444" stroke-width="0.6" />
<path d="M913 428 L916.6 428 L916.6 471.2 L938.7 471.2 L938.7 480 L935 480 L935 474.7 L913 474.7 Z" fill="#ebebeb" stroke="#2a2a2a" stroke-width="1" />
<rect x="989.3" y="450" width="12.2" height="15" fill="#fff" stroke="#2a2a2a" stroke-width="0.7" />
<path d="M935 479.5 A28 28 0 0 0 908 506" fill="none" stroke="#444" stroke-width="0.6" />
<line x1="908" y1="506" x2="933" y2="506" stroke="#111" stroke-width="1.6" />
<path d="M989.3 479.5 A26 26 0 0 0 963 505" fill="none" stroke="#444" stroke-width="0.6" />
<line x1="963" y1="506" x2="989" y2="506" stroke="#111" stroke-width="1.6" />
<rect x="1001.5" y="505" width="7.5" height="7.4" fill="#ebebeb" stroke="#2a2a2a" stroke-width="0.8" />
<rect x="989" y="505" width="4" height="7.4" fill="#ebebeb" stroke="#2a2a2a" stroke-width="1" />
<rect x="732.5" y="512.3" width="9.8" height="295.2" fill="#c8c8c8" stroke="#2a2a2a" stroke-width="1" />
<rect x="742.3" y="512.3" width="10" height="9.6" fill="#c8c8c8" stroke="#2a2a2a" stroke-width="1" />
<rect x="913" y="512.4" width="128" height="9.3" fill="#c8c8c8" stroke="#2a2a2a" stroke-width="1" />
<rect x="1070.3" y="512.4" width="43.1" height="9.3" fill="#c8c8c8" stroke="#2a2a2a" stroke-width="1" />
<rect x="1103.6" y="512.4" width="9.8" height="295" fill="#c8c8c8" stroke="#2a2a2a" stroke-width="1" />
<path d="M742.3 797.4 L877.8 797.4 L877.8 818.3 L888.4 818.3 L888.4 827.6 L869 827.6 L869 807.5 L732.5 807.5 L732.5 797.4 Z" fill="#c8c8c8" stroke="#2a2a2a" stroke-width="1" />
<path d="M968 797.7 L1103.6 797.7 L1113.4 797.7 L1113.4 807.4 L977.6 807.4 L977.6 827.6 L956.3 827.6 L956.3 818.3 L968 818.3 Z" fill="#c8c8c8" stroke="#2a2a2a" stroke-width="1" />
<rect x="731.5" y="562" width="11.8" height="65" fill="#fff" stroke="#2a2a2a" stroke-width="0.8" />
<line x1="736.4" y1="563" x2="736.4" y2="626" stroke="#111" stroke-width="2" />
<rect x="731.5" y="698" width="11.8" height="22.6" fill="#fff" stroke="#2a2a2a" stroke-width="0.8" />
<line x1="736.4" y1="699" x2="736.4" y2="719.6" stroke="#111" stroke-width="2" />
<rect x="731.5" y="749.6" width="11.8" height="22.6" fill="#fff" stroke="#2a2a2a" stroke-width="0.8" />
<line x1="736.4" y1="750.6" x2="736.4" y2="771.2" stroke="#111" stroke-width="2" />
<rect x="760.4" y="796.4" width="30.2" height="12.1" fill="#fff" stroke="#2a2a2a" stroke-width="0.8" />
<line x1="761.4" y1="803.45" x2="789.6" y2="803.45" stroke="#111" stroke-width="1.8" />
<rect x="818.3" y="796.4" width="30.2" height="12.1" fill="#fff" stroke="#2a2a2a" stroke-width="0.8" />
<line x1="819.3" y1="803.45" x2="847.5" y2="803.45" stroke="#111" stroke-width="1.8" />
<rect x="1000" y="796.7" width="27" height="11.7" fill="#fff" stroke="#2a2a2a" stroke-width="0.8" />
<line x1="1001" y1="803.55" x2="1026" y2="803.55" stroke="#111" stroke-width="1.8" />
<rect x="1056" y="796.7" width="29" height="11.7" fill="#fff" stroke="#2a2a2a" stroke-width="0.8" />
<line x1="1057" y1="803.55" x2="1084" y2="803.55" stroke="#111" stroke-width="1.8" />
<rect x="1040.8" y="511.4" width="29.5" height="11.3" fill="#fff" stroke="#2a2a2a" stroke-width="0.8" />
<line x1="1041.8" y1="518.05" x2="1069.3" y2="518.05" stroke="#111" stroke-width="1.8" />
<rect x="1102.6" y="620.5" width="11.8" height="31" fill="#fff" stroke="#2a2a2a" stroke-width="0.8" />
<line x1="1107.5" y1="621.5" x2="1107.5" y2="650.5" stroke="#111" stroke-width="2" />
<rect x="742.3" y="666.4" width="133.2" height="4.2" fill="#fff" stroke="#222" stroke-width="1" />
<rect x="875.5" y="654.5" width="3.3" height="112.5" fill="#c8c8c8" stroke="#2a2a2a" stroke-width="1" />
<rect x="875.5" y="654.5" width="41" height="3.3" fill="#c8c8c8" stroke="#2a2a2a" stroke-width="1" />
<rect x="904" y="657.8" width="2.9" height="58.7" fill="#c8c8c8" stroke="#2a2a2a" stroke-width="1" />
<path d="M855.5 696.2 L875.5 696.2 L875.5 699.2 L858.5 699.2 L858.5 715.6 L855.5 715.6 Z" fill="#c8c8c8" stroke="#2a2a2a" stroke-width="0.9" />
<path d="M855.5 739.8 L858.5 739.8 L858.5 755.2 L875.5 755.2 L875.5 758.2 L855.5 758.2 Z" fill="#c8c8c8" stroke="#2a2a2a" stroke-width="0.9" />
<rect x="967" y="654.5" width="3.8" height="143.2" fill="#c8c8c8" stroke="#2a2a2a" stroke-width="1" />
<path d="M970.8 696.2 L990.2 696.2 L990.2 715.6 L987.2 715.6 L987.2 699.2 L970.8 699.2 Z" fill="#c8c8c8" stroke="#2a2a2a" stroke-width="0.9" />
<path d="M987.2 739.8 L990.2 739.8 L990.2 758.2 L970.8 758.2 L970.8 755.2 L987.2 755.2 Z" fill="#c8c8c8" stroke="#2a2a2a" stroke-width="0.9" />
<rect x="960" y="653.8" width="37" height="3.7" fill="#c8c8c8" stroke="#2a2a2a" stroke-width="1" />
<rect x="1023.5" y="653.8" width="80.1" height="3.7" fill="#c8c8c8" stroke="#2a2a2a" stroke-width="1" />
<rect x="913.4" y="521.7" width="2.9" height="21.6" fill="#c8c8c8" stroke="#2a2a2a" stroke-width="1" />
<rect x="913.4" y="567.3" width="2.9" height="58.2" fill="#c8c8c8" stroke="#2a2a2a" stroke-width="1" />
<rect x="916.3" y="572.4" width="19.3" height="3" fill="#c8c8c8" stroke="#2a2a2a" stroke-width="1" />
<rect x="913.4" y="619.4" width="76.4" height="3.2" fill="#c8c8c8" stroke="#2a2a2a" stroke-width="1" />
<rect x="986.9" y="521.7" width="2.9" height="100.9" fill="#c8c8c8" stroke="#2a2a2a" stroke-width="1" />
<rect x="932" y="572.4" width="3.6" height="47" fill="#c8c8c8" stroke="#2a2a2a" stroke-width="1" />
<line x1="916.3" y1="543.3" x2="938" y2="543.3" stroke="#111" stroke-width="1.6" />
<path d="M938 543.3 A24 24 0 0 1 916.3 567" fill="none" stroke="#444" stroke-width="0.6" />
<path d="M989.8 608 L996.6 608 L996.6 581 L999.5 581 L999.5 611 L989.8 611 Z" fill="#c8c8c8" stroke="#2a2a2a" stroke-width="0.9" />
<path d="M999.5 581 A28 28 0 0 1 1024 607" fill="none" stroke="#444" stroke-width="0.6" />
<path d="M1030 593.8 L1103.6 593.8 L1103.6 598 L1033.8 598 L1033.8 623.6 L1030 623.6 Z" fill="#c8c8c8" stroke="#2a2a2a" stroke-width="1" />
<line x1="1031.5" y1="650" x2="1060.2" y2="650" stroke="#111" stroke-width="1.6" />
<path d="M1034 623.6 A27 27 0 0 1 1060.2 650" fill="none" stroke="#444" stroke-width="0.6" />
<line x1="848" y1="794" x2="878" y2="794" stroke="#111" stroke-width="1.6" />
<path d="M878.8 767 A30 30 0 0 0 848 794" fill="none" stroke="#444" stroke-width="0.6" />
<line x1="954.3" y1="788.3" x2="954.3" y2="818" stroke="#777" stroke-width="1.2" />
<path d="M954.3 788.3 A32 32 0 0 0 922.4 820" fill="none" stroke="#444" stroke-width="0.6" />
<line x1="889" y1="820.5" x2="921" y2="820.5" stroke="#777" stroke-width="1" />
<path d="M888.4 818.3 Q888.4 837.2 903 837.2 H941 Q956.3 837.2 956.3 818.3" fill="none" stroke="#333" stroke-width="0.8" />
<line x1="997" y1="657.5" x2="997" y2="683" stroke="#111" stroke-width="1.4" />
<path d="M1023 657.5 A26 26 0 0 1 997 683" fill="none" stroke="#444" stroke-width="0.6" />
<path d="M917 625.5 A27 27 0 0 0 890 650" fill="none" stroke="#444" stroke-width="0.6" />
<line x1="890" y1="650.5" x2="916" y2="650.5" stroke="#111" stroke-width="1.4" />
<path d="M562.5 499.3 V283 H743.5 V316.4 H1020.5 V409 H1036.9 V512.4 H913 V521.9 H752.3 V512.3 H732.5 V499.3 Z" fill="none" stroke="#d9161c" stroke-width="2.4" stroke-dasharray="10 8"/>
<text x="653.5" y="389.6" font-size="6.5" text-anchor="middle" fill="#1a1a1a" font-family="Liberation Sans" >Living Room</text>
<rect x="634.94" y="391.8" width="37.13" height="6.3" fill="#fff" stroke="#222" stroke-width="1.1" />
<text x="653.5" y="396.7" font-size="4.2" text-anchor="middle" fill="#1a1a1a" font-family="Liberation Sans" >A: 31.4 m&#178;</text>
<text x="824.6" y="291.3" font-size="6.5" text-anchor="middle" fill="#1a1a1a" font-family="Liberation Sans" >Patio</text>
<rect x="810.6" y="293.5" width="28" height="6.3" fill="#fff" stroke="#222" stroke-width="1.1" />
<text x="824.6" y="298.4" font-size="4.2" text-anchor="middle" fill="#1a1a1a" font-family="Liberation Sans" >A: 20.8 m&#178;</text>
<text x="648.4" y="265.6" font-size="7" text-anchor="middle" fill="#1a1a1a" font-family="Liberation Sans" >Plant</text>
<text x="648.4" y="273.7" font-size="7" text-anchor="middle" fill="#1a1a1a" font-family="Liberation Sans" >Area</text>
<text x="971" y="290.2" font-size="7" text-anchor="middle" fill="#1a1a1a" font-family="Liberation Sans" >Plant</text>
<text x="971" y="297.6" font-size="7" text-anchor="middle" fill="#1a1a1a" font-family="Liberation Sans" >Area</text>
<text x="830.5" y="439.7" font-size="6.5" text-anchor="middle" fill="#1a1a1a" font-family="Liberation Sans" >Dining</text>
<rect x="816.5" y="441.9" width="28" height="6.3" fill="#fff" stroke="#222" stroke-width="1.1" />
<text x="830.5" y="446.8" font-size="4.2" text-anchor="middle" fill="#1a1a1a" font-family="Liberation Sans" >A: 26.3 m&#178;</text>
<text x="952.1" y="375.7" font-size="6.5" text-anchor="middle" fill="#1a1a1a" font-family="Liberation Sans" >Utility</text>
<rect x="938.1" y="377.9" width="28" height="6.3" fill="#fff" stroke="#222" stroke-width="1.1" />
<text x="952.1" y="382.8" font-size="4.2" text-anchor="middle" fill="#1a1a1a" font-family="Liberation Sans" >A: 6.8 m&#178;</text>
<text x="952.9" y="441.5" font-size="6.5" text-anchor="middle" fill="#1a1a1a" font-family="Liberation Sans" >Boot Room</text>
<rect x="936.14" y="443.7" width="33.51" height="6.3" fill="#fff" stroke="#222" stroke-width="1.1" />
<text x="952.9" y="448.6" font-size="4.2" text-anchor="middle" fill="#1a1a1a" font-family="Liberation Sans" >A: 5.2 m&#178;</text>
<text x="818.5" y="560" font-size="6.5" text-anchor="middle" fill="#1a1a1a" font-family="Liberation Sans" >Kitchen</text>
<rect x="804.5" y="562.2" width="28" height="6.3" fill="#fff" stroke="#222" stroke-width="1.1" />
<text x="818.5" y="567.1" font-size="4.2" text-anchor="middle" fill="#1a1a1a" font-family="Liberation Sans" >A: 25.1 m&#178;</text>
<text x="951" y="562" font-size="6.5" text-anchor="middle" fill="#1a1a1a" font-family="Liberation Sans" >Pantry</text>
<rect x="937" y="564.2" width="28" height="6.3" fill="#fff" stroke="#222" stroke-width="1.1" />
<text x="951" y="569.1" font-size="4.2" text-anchor="middle" fill="#1a1a1a" font-family="Liberation Sans" >A: 5.9 m&#178;</text>
<text x="1046" y="556.2" font-size="6.5" text-anchor="middle" fill="#1a1a1a" font-family="Liberation Sans" >Wet Room</text>
<rect x="1030.21" y="558.4" width="31.58" height="6.3" fill="#fff" stroke="#222" stroke-width="1.1" />
<text x="1046" y="563.3" font-size="4.2" text-anchor="middle" fill="#1a1a1a" font-family="Liberation Sans" >A: 8.7 m&#178;</text>
<text x="1068" y="624" font-size="6.5" text-anchor="middle" fill="#1a1a1a" font-family="Liberation Sans" >Study</text>
<rect x="1054" y="626.2" width="28" height="6.3" fill="#fff" stroke="#222" stroke-width="1.1" />
<text x="1068" y="631.1" font-size="4.2" text-anchor="middle" fill="#1a1a1a" font-family="Liberation Sans" >A: 4.0 m&#178;</text>
<text x="802.4" y="726.9" font-size="6.5" text-anchor="middle" fill="#1a1a1a" font-family="Liberation Sans" >Snug</text>
<rect x="788.4" y="729.1" width="28" height="6.3" fill="#fff" stroke="#222" stroke-width="1.1" />
<text x="802.4" y="734" font-size="4.2" text-anchor="middle" fill="#1a1a1a" font-family="Liberation Sans" >A: 15.5 m&#178;</text>
<text x="923" y="763" font-size="6.5" text-anchor="middle" fill="#1a1a1a" font-family="Liberation Sans" >Hall</text>
<rect x="909" y="765.2" width="28" height="6.3" fill="#fff" stroke="#222" stroke-width="1.1" />
<text x="923" y="770.1" font-size="4.2" text-anchor="middle" fill="#1a1a1a" font-family="Liberation Sans" >A: 18.3 m&#178;</text>
<text x="1036.5" y="726.5" font-size="6.5" text-anchor="middle" fill="#1a1a1a" font-family="Liberation Sans" >Guest Bedroom</text>
<rect x="1013.24" y="728.7" width="46.52" height="6.3" fill="#fff" stroke="#222" stroke-width="1.1" />
<text x="1036.5" y="733.6" font-size="4.2" text-anchor="middle" fill="#1a1a1a" font-family="Liberation Sans" >A: 17.2 m&#178;</text>
<text x="868" y="347" font-size="5.2" text-anchor="middle" fill="#1a1a1a" font-family="Liberation Sans" >Patio Entrance</text>
<path d="M858 348.5 L868 356 L878 348.5 L868 351 Z" fill="#000"/>
<text x="1017" y="493" font-size="5.2" text-anchor="middle" fill="#1a1a1a" font-family="Liberation Sans" transform="rotate(-90 1017 493)" >Side Entrance</text>
<path d="M1013 483 L1004 492.5 L1013 502 L1009 492.5 Z" fill="#000"/>
<path d="M912 875.5 L922 868.5 L932 875.5 L922 872.5 Z" fill="#000"/>
<text x="922" y="880.5" font-size="5.2" text-anchor="middle" fill="#1a1a1a" font-family="Liberation Sans" >Main Entrance</text>
<text x="761.7" y="395.4" font-size="8.8" text-anchor="start" fill="#1a1a1a" font-family="Liberation Sans" >Outline of rooflight</text>
<text x="761.7" y="405.2" font-size="8.8" text-anchor="start" fill="#1a1a1a" font-family="Liberation Sans" >overhead</text>
<line x1="842" y1="397.8" x2="842" y2="418" stroke="#333" stroke-width="0.7" />
<path d="M842 422 l-2.75 -5 h5.5 z" fill="#111"/>
<text x="1139" y="443.8" font-size="8.7" text-anchor="start" fill="#1a1a1a" font-family="Liberation Sans" >Outline of flat</text>
<text x="1139" y="453.7" font-size="8.7" text-anchor="start" fill="#1a1a1a" font-family="Liberation Sans" >roof overhead</text>
<line x1="1042" y1="445.5" x2="1135" y2="445.5" stroke="#444" stroke-width="0.8" />
<path d="M1037.5 445.5 l5.5 -3.0250000000000004 v6.050000000000001 z" fill="#111"/>
<text x="1139" y="480.6" font-size="8.7" text-anchor="start" fill="#1a1a1a" font-family="Liberation Sans" >Provide 1200 mm &#215; 1200 mm</text>
<text x="1139" y="490.6" font-size="8.7" text-anchor="start" fill="#1a1a1a" font-family="Liberation Sans" >level platform at entrance door</text>
<text x="1139" y="500.6" font-size="8.7" text-anchor="start" fill="#1a1a1a" font-family="Liberation Sans" >in accordance with TGD Part M</text>
<line x1="1042" y1="488.5" x2="1135" y2="488.5" stroke="#444" stroke-width="0.8" />
<path d="M1037.5 488.5 l5.5 -3.0250000000000004 v6.050000000000001 z" fill="#111"/>
<text x="1139" y="635" font-size="8.7" text-anchor="start" fill="#1a1a1a" font-family="Liberation Sans" >Proposed new</text>
<text x="1139" y="645" font-size="8.7" text-anchor="start" fill="#1a1a1a" font-family="Liberation Sans" >window</text>
<line x1="1118" y1="637.5" x2="1135" y2="637.5" stroke="#444" stroke-width="0.8" />
<path d="M1113.5 637.5 l5.5 -3.0250000000000004 v6.050000000000001 z" fill="#111"/>
<text x="447" y="926.4" font-size="15.4" text-anchor="start" fill="#1a1a1a" font-family="Liberation Sans" >1</text>
<text x="782.1" y="926.4" font-size="15.4" text-anchor="middle" fill="#1a1a1a" font-family="Liberation Sans" >Ground Floor</text>
<text x="1117.4" y="926.4" font-size="15.4" text-anchor="end" fill="#1a1a1a" font-family="Liberation Sans" >1:100</text>
<line x1="446" y1="930.3" x2="1117" y2="930.3" stroke="#999" stroke-width="1" />
<path d="M1366 980 V647.5 H1588.5" fill="none" stroke="#777" stroke-width="1" />
<line x1="1366" y1="668.3" x2="1588.5" y2="668.3" stroke="#777" stroke-width="1" />
<line x1="1366" y1="776.7" x2="1588.5" y2="776.7" stroke="#777" stroke-width="1" />
<line x1="1366" y1="856" x2="1588.5" y2="856" stroke="#777" stroke-width="1" />
<line x1="1366" y1="888.1" x2="1588.5" y2="888.1" stroke="#777" stroke-width="1.2" />
<line x1="1366" y1="919.4" x2="1445.4" y2="919.4" stroke="#333" stroke-width="1" />
<line x1="1366" y1="951.2" x2="1445.4" y2="951.2" stroke="#333" stroke-width="1" />
<line x1="1445.4" y1="856" x2="1445.4" y2="980" stroke="#555" stroke-width="1" />
<line x1="1524.6" y1="856" x2="1524.6" y2="888.1" stroke="#555" stroke-width="1" />
<text x="1477" y="665" font-size="17" text-anchor="middle" fill="#1a1a1a" font-family="Liberation Sans" textLength="213" lengthAdjust="spacingAndGlyphs">PLANNING DRAWING ONLY</text>
<g fill="#000">
<path d="M1435.7 678.3 L1441.8 678.3 L1466 747 L1470 750.2 L1455 750.2 L1458.8 747 L1436.6 682 Z"/>
<path d="M1409.2 750.2 L1419.8 750.2 L1417.6 747.5 L1416.8 742.5 L1413.5 747 Z"/>
<path d="M1472 678.4 C1488 678.4 1496.3 687 1496.3 697 C1496.3 708.5 1487 714.8 1470 715 L1470 713.6 C1481 713.3 1489 707 1489 697 C1489 686.5 1484 679.8 1472 679.8 Z"/>
<path d="M1471 714.3 C1478 714.6 1483.5 718.5 1488.5 727.5 C1496 741 1503 750.4 1519 750.4 C1530 750.4 1538 746.5 1544.8 740.8 L1544.2 739.8 C1537 744.5 1529 748.3 1519.5 748.3 C1508 748.3 1501.5 741 1494.5 728.5 C1488.5 718.5 1483 714.8 1476.5 714.5 Z"/>
<path d="M1496.8 684.5 C1504 678.5 1512 676.8 1521 676.8 C1530 676.8 1537.5 679 1543.5 680.6 L1546 678.8 L1546 692 L1544.8 692 C1541.5 685.5 1533 679.2 1521 679.2 C1511 679.2 1504.5 683 1498.6 689 Z"/>
</g>
<line x1="1436.6" y1="678.5" x2="1416.5" y2="745" stroke="#000" stroke-width="1.1" />
<line x1="1450.1" y1="679.1" x2="1472.5" y2="679.1" stroke="#000" stroke-width="1.4" />
<path d="M1416 743 Q1438 720 1468.5 714.7" fill="none" stroke="#000" stroke-width="1" />
<text x="1408" y="767.3" font-size="16.3" fill="#666" font-family="Liberation Sans" textLength="139" lengthAdjust="spacing">DESIGNS</text>
<text x="1367.5" y="785.2" font-size="7" text-anchor="start" fill="#1a1a1a" font-family="Liberation Serif" >JOB DETAILS</text>
<text x="1477" y="799.8" font-size="13" text-anchor="middle" fill="#1a1a1a" font-family="Liberation Sans" >Proposed Extension &amp; Renovation to</text>
<text x="1477" y="814.8" font-size="13" text-anchor="middle" fill="#1a1a1a" font-family="Liberation Sans" >Existing Dwelling at Graddum,</text>
<text x="1477" y="829.8" font-size="13" text-anchor="middle" fill="#1a1a1a" font-family="Liberation Sans" >Crosserlough for Ciaran &amp; Mary</text>
<text x="1477" y="844.8" font-size="13" text-anchor="middle" fill="#1a1a1a" font-family="Liberation Sans" >McCabe</text>
<text x="1367.5" y="864" font-size="6.6" text-anchor="start" fill="#1a1a1a" font-family="Liberation Serif" >Scale @ A3</text>
<text x="1369" y="874.8" font-size="9" text-anchor="start" fill="#1a1a1a" font-family="Liberation Sans" >As shown</text>
<text x="1447" y="864" font-size="6.6" text-anchor="start" fill="#1a1a1a" font-family="Liberation Serif" >Dwg.no</text>
<text x="1448" y="874.8" font-size="9" text-anchor="start" fill="#1a1a1a" font-family="Liberation Sans" >PL006</text>
<text x="1526.7" y="864" font-size="6.6" text-anchor="start" fill="#1a1a1a" font-family="Liberation Serif" >Amend.</text>
<text x="1367.5" y="896" font-size="6.6" text-anchor="start" fill="#1a1a1a" font-family="Liberation Serif" >Date</text>
<text x="1369" y="906.9" font-size="9" text-anchor="start" fill="#1a1a1a" font-family="Liberation Sans" >26/01/2026</text>
<text x="1447" y="896" font-size="6.6" text-anchor="start" fill="#1a1a1a" font-family="Liberation Serif" >Description</text>
<text x="1515.6" y="906.5" font-size="9" text-anchor="middle" fill="#1a1a1a" font-family="Liberation Sans" >PLANNING DRAWING:</text>
<text x="1515.6" y="916.7" font-size="9" text-anchor="middle" fill="#1a1a1a" font-family="Liberation Sans" >Proposed - Ground Floor</text>
<text x="1515.6" y="926.6" font-size="9" text-anchor="middle" fill="#1a1a1a" font-family="Liberation Sans" >Plan</text>
<text x="1367.5" y="928" font-size="6.6" text-anchor="start" fill="#1a1a1a" font-family="Liberation Serif" >Drawn by</text>
<text x="1369" y="938.8" font-size="9" text-anchor="start" fill="#1a1a1a" font-family="Liberation Sans" >Anita Reilly</text>
<text x="1367.5" y="960" font-size="6.6" text-anchor="start" fill="#1a1a1a" font-family="Liberation Serif" >Checked by</text>
<text x="1369" y="970.4" font-size="9" text-anchor="start" fill="#1a1a1a" font-family="Liberation Sans" >Anita Reilly</text>
</g>
</svg>
<div id="task" class="a"></div>
<svg class="a" style="left:0;top:0" width="1920" height="1032" viewBox="0 0 1920 1032">
<path d="M19 1013a6 6 0 0 1 3-11.5a7.5 7.5 0 0 1 14 1.5a5 5 0 0 1 6 5a5 5 0 0 1-5 5z" fill="#c9d9f2"/>
<path d="M19 1013a6 6 0 0 1 1-10c4 2 12 3 22 5a5 5 0 0 1-5 5z" fill="#9fbce6" opacity="0.7"/>
<circle cx="38.5" cy="998" r="7.5" fill="#c42b1c"/><text x="38.5" y="1002" font-size="10" fill="#fff" text-anchor="middle" font-family="Liberation Sans">1</text>
<text x="51" y="1004" font-size="12" fill="#fff" font-family="Liberation Sans">11°C</text>
<text x="51" y="1020" font-size="12" fill="#e6e6e6" font-family="Liberation Sans">Cloudy</text>
<defs><linearGradient id="wg" x1="0" y1="0" x2="1" y2="1"><stop offset="0" stop-color="#6fd6ff"/><stop offset="1" stop-color="#1f9de8"/></linearGradient></defs>
<rect x="595" y="997" width="11" height="11" fill="url(#wg)"/>
<rect x="607" y="997" width="11" height="11" fill="url(#wg)"/>
<rect x="595" y="1009" width="11" height="11" fill="url(#wg)"/>
<rect x="607" y="1009" width="11" height="11" fill="url(#wg)"/>
<rect x="632" y="993" width="218" height="30" rx="15" fill="#f1f1ef"/>
<g fill="none" stroke="#222" stroke-width="1.6"><circle cx="649.5" cy="1007" r="5.5"/><path d="M653.5 1011l3.5 3.5"/></g>
<text x="668" y="1012.5" font-size="14" fill="#5e5e5e" font-family="Liberation Sans">Search</text>
<rect x="863" y="1003" width="18" height="15" rx="1.5" fill="#8a8a8a"/><rect x="870" y="997" width="18" height="15" rx="1.5" fill="#e8e8e8"/>
<path d="M908 1005l10-8 11 8v12a2 2 0 0 1-2 2h-17a2 2 0 0 1-2-2z" fill="#1c7ad6"/><path d="M908 1005l10 7 11-7" fill="#59b8f5"/><rect x="906" y="1007" width="10" height="10" rx="1.5" fill="#0f5fb8"/><text x="911" y="1015.5" font-size="8" fill="#fff" text-anchor="middle" font-family="Liberation Sans" font-weight="bold">O</text>
<rect x="916" y="1024" width="6" height="2.5" rx="1.2" fill="#9a9a9a"/>
<path d="M955 1018c-4 0-5-3-4-6l3-9c1-3 3-4 6-4h6l-6 19z" fill="url(#cg)"/><path d="M966 1000h5c3 0 4 3 3 6l-3 9c-1 3-3 4-6 4h-6z" fill="#e35cc4"/>
<rect x="960" y="1024" width="6" height="2.5" rx="1.2" fill="#9a9a9a"/>
<circle cx="1004" cy="1000" r="3.5" fill="#7b83eb"/><circle cx="1013" cy="1001.5" r="3" fill="#7b83eb"/><path d="M1000 1006h17a1 1 0 0 1 1 1v7a6 6 0 0 1-6 6h-6a6 6 0 0 1-6-6z" fill="#5b5fc7"/><rect x="995" y="1005" width="10" height="10" rx="1.5" fill="#4b53bc"/><text x="1000" y="1013.5" font-size="8" fill="#fff" text-anchor="middle" font-family="Liberation Sans" font-weight="bold">T</text>
<rect x="1004" y="1024" width="6" height="2.5" rx="1.2" fill="#9a9a9a"/>
<path d="M1039 997h8l2 2h12v18h-22z" fill="#e8b64a"/><rect x="1039" y="1001" width="23" height="16" rx="1" fill="#ffd35a"/><rect x="1046" y="1011" width="10" height="6" rx="1" fill="#1f7fd0"/>
<rect x="1049" y="1024" width="6" height="2.5" rx="1.2" fill="#9a9a9a"/>
<rect x="1075.5" y="988" width="34.5" height="40" rx="4" fill="#2e3022" stroke="#3a3c2b" stroke-width="1"/>
<path d="M1110.5 990.5q3.5 0 3.5 4v29q0 3.5-3.5 3.5" fill="none" stroke="#3a3c2b" stroke-width="1"/>
<defs><linearGradient id="eg" x1="0" y1="0" x2="1" y2="0.8"><stop offset="0" stop-color="#3ec6f2"/><stop offset="0.55" stop-color="#35c1c8"/><stop offset="1" stop-color="#62d655"/></linearGradient></defs>
<circle cx="1095.5" cy="1007.8" r="12" fill="url(#eg)"/>
<path d="M1083.6 1005.5C1085 999 1093 998.5 1097 1004C1091 1001 1086.5 1004 1087 1010C1087.5 1017 1096 1019.5 1104.5 1015.5A12 12 0 0 1 1083.6 1005.5Z" fill="#1b82d8"/>
<path d="M1087 1010C1087.5 1017 1096 1019.5 1104.5 1015.5C1100 1018 1092 1013 1091.5 1008C1091 1004 1094 1002.5 1097 1004C1093 1001 1087 1003.5 1087 1010Z" fill="#1458aa"/>
<path d="M1096.5 1004.5C1099 1007 1098 1011 1095 1012C1099 1014 1104 1013 1107 1009.5" fill="#5fd35a"/>
<circle cx="1096" cy="1008" r="2.3" fill="#2e3022"/>
<rect x="1087" y="1024" width="16" height="3" rx="1.5" fill="#5cc4f7"/>
<rect x="1127" y="1001" width="23" height="19" rx="3" fill="#f3f3f3"/><path d="M1133 1001v-3a2 2 0 0 1 2-2h7a2 2 0 0 1 2 2v3" fill="none" stroke="#47a9e0" stroke-width="1.6"/><rect x="1133.5" y="1006" width="4" height="4" fill="#f25022"/><rect x="1138.5" y="1006" width="4" height="4" fill="#7fba00"/><rect x="1133.5" y="1011" width="4" height="4" fill="#00a4ef"/><rect x="1138.5" y="1011" width="4" height="4" fill="#ffb900"/>
<path d="M1172 1014c-3 0-4-2-3-5l3-6c1-2 2-3 5-3h5l-4 14z" fill="url(#cg)"/><path d="M1182 1002h4c2 0 3 2 2 4l-3 8h-8z" fill="#e35cc4"/><rect x="1175" y="1014" width="19" height="7" fill="#111"/><text x="1184.5" y="1020.5" font-size="7" fill="#fff" text-anchor="middle" font-family="Liberation Sans" font-weight="bold">M365</text>
<rect x="1216" y="996" width="18" height="18" rx="2" fill="#f2f2f2"/><path d="M1219 999h9M1219 999v9" stroke="#d33" stroke-width="2" stroke-dasharray="2 1.5"/><path d="M1226 1004l8 8M1234 1004l-8 10" stroke="#aaa" stroke-width="1.5"/><circle cx="1238" cy="1007" r="2.5" fill="none" stroke="#3a8ad8" stroke-width="1.3"/><circle cx="1229" cy="1019" r="2.5" fill="none" stroke="#3a8ad8" stroke-width="1.3"/>
<circle cx="1270.5" cy="1007.5" r="11" fill="none" stroke="#25d366" stroke-width="2.5"/><path d="M1261 1018l1.5-5 4 3z" fill="#25d366"/><path d="M1266 1003c0 5 4 9 9 9l1.5-2-2.5-1.5-1.2 1c-2-1-3.5-2.5-4.5-4.5l1-1.2-1.5-2.5z" fill="#25d366"/>
<rect x="1303" y="1000" width="16" height="20" rx="2" fill="#dfe8f2" transform="rotate(-12 1311 1010)"/><rect x="1307" y="998" width="16" height="20" rx="2" fill="#5b9bd5" transform="rotate(10 1315 1008)"/><rect x="1304" y="999" width="15" height="20" rx="2" fill="#f5f5f5"/><path d="M1311.5 1003c-3 3-5 5-5 7c0 2 3 2.5 4 1l-1 3h4l-1-3c1 1.5 4 1 4-1c0-2-2-4-5-7z" fill="#111"/><path d="M1320 996v6M1317 999h6" stroke="#fff" stroke-width="1.2"/>
</svg>
<div class="a tt" style="left:1849px;top:993px">13:16</div>
<div class="a tt" style="left:1838px;top:1009px">22/03/2026</div>
</body></html>
